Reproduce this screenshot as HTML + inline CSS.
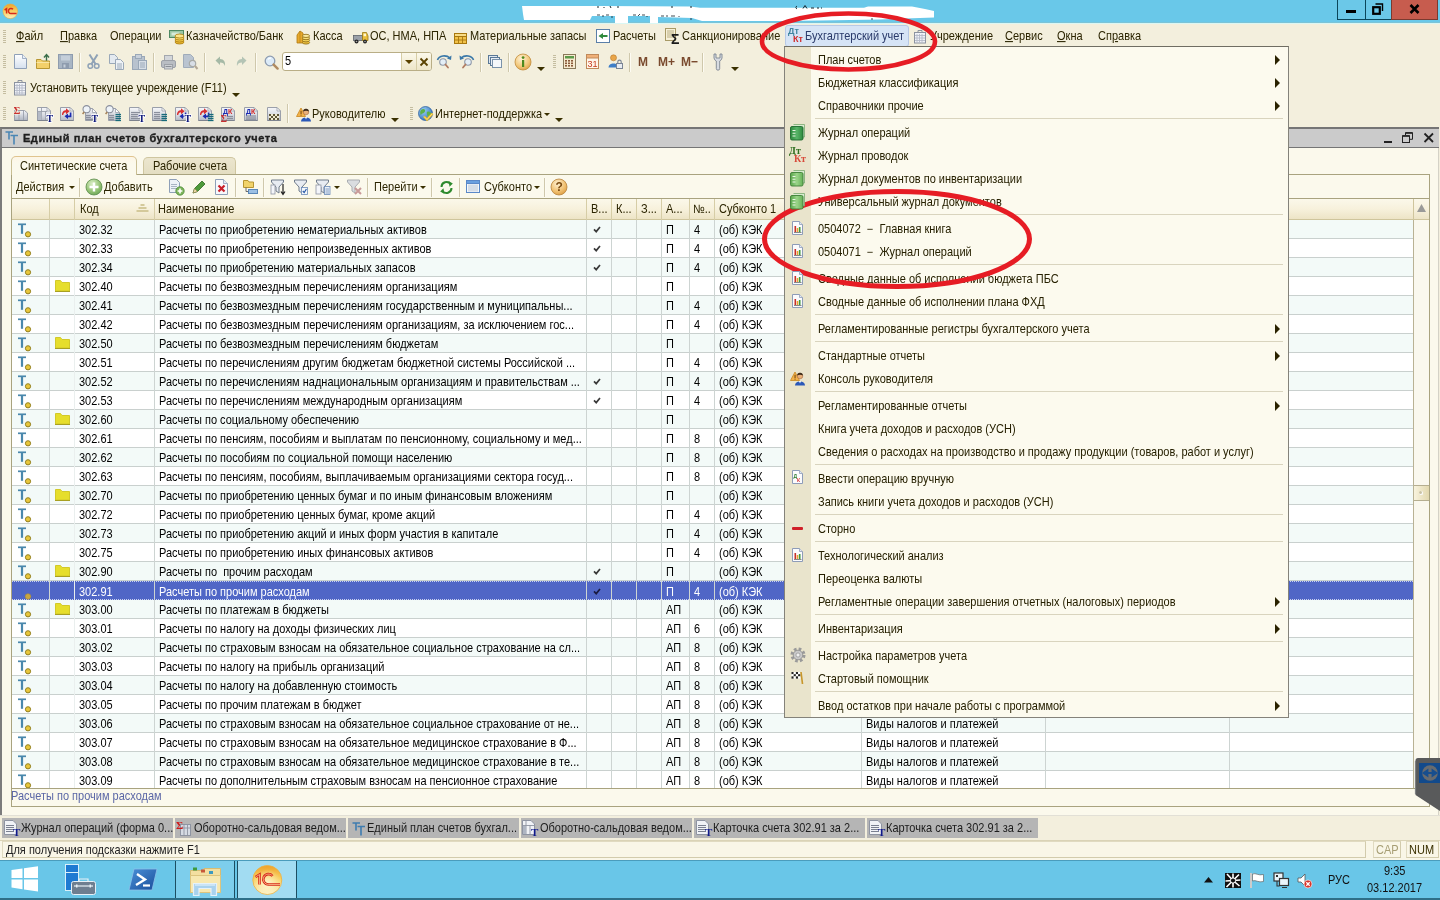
<!DOCTYPE html>
<html><head><meta charset="utf-8"><title>1C</title><style>
*{box-sizing:border-box;margin:0;padding:0}
html,body{width:1440px;height:900px;overflow:hidden}
body{position:relative;background:#F3EFDD;font-family:"Liberation Sans",sans-serif;font-size:11px;color:#2b2400;line-height:13px}
.a{position:absolute}
.t{position:absolute;white-space:nowrap;transform:scaleY(1.08);transform-origin:0 10.3px}
u{text-decoration:underline}
#wrap{position:absolute;left:0;top:0;width:1440px;height:900px;overflow:hidden;will-change:transform;-webkit-font-smoothing:antialiased}
#title{left:0;top:0;width:1440px;height:22px;background:#6BC8E8}
#title2{left:0;top:22px;width:1440px;height:1px;background:#D8F3F6}
.wb{position:absolute;top:0;height:20px;border:1px solid #0B465A;border-top:none}
#mdi{left:0;top:127px;width:1439px;height:689px;background:#FBF9EC;border-left:2px solid #7C7C7C;border-right:1px solid #9a9a9a}
#mdit{left:0;top:127px;width:1439px;height:21px;background:#CBCBCB;border-top:2px solid #777;border-bottom:1px solid #777;border-left:2px solid #7C7C7C}
.cell{position:absolute;top:1px;height:18px;line-height:18px;white-space:nowrap;overflow:hidden;color:#000;padding-left:4px;transform:scaleY(1.08);transform-origin:0 12.8px}
.row{position:absolute;left:12px;width:1401px;height:19px;border-bottom:1px solid #C9D0CE}
.r0{background:#F3FAF8}.r1{background:#FFFFFF}
.vs{position:absolute;top:220px;width:1px;height:568px;background:#CDD4D2}
.hs{position:absolute;top:199px;width:1px;height:21px;background:#D6CDA6}
.mi{position:absolute;left:818px;margin-top:0.5px;white-space:nowrap;color:#262000;transform:scaleY(1.08);transform-origin:0 10.3px}
.msep{position:absolute;left:815px;width:468px;height:1px;background:#D9D4BE}
.marr{position:absolute;left:1275px;margin-top:1px;width:0;height:0;border-left:5px solid #2a2200;border-top:5px solid transparent;border-bottom:5px solid transparent}
.wtab{position:absolute;top:818px;height:20px;background:#B5B5B5;line-height:20px;white-space:nowrap;overflow:hidden;color:#1c1c1c}
.wtab span{display:inline-block;transform:scaleY(1.08);transform-origin:0 13.8px}
.tsep{position:absolute;width:1px;background:#C9C2A5;border-right:1px solid #fff}
.grip{position:absolute;width:3px;background:repeating-linear-gradient(to bottom,#C4BDA0 0,#C4BDA0 1px,transparent 1px,transparent 2px)}
.dd{position:absolute;width:0;height:0;border-top:4px solid #3a3000;border-left:4px solid transparent;border-right:4px solid transparent}
.dds{position:absolute;width:0;height:0;border-top:3px solid #3a3000;border-left:3px solid transparent;border-right:3px solid transparent}
</style></head><body><div id="wrap">
<div class="a" style="left:0px;top:0px;width:1440px;height:23px;background:#69C8E9"></div>
<div class="a" style="left:0px;top:22px;width:1440px;height:1px;background:#7CC3D6"></div>
<div class="a" style="left:0px;top:23px;width:1440px;height:1px;background:#DAF7F4"></div>
<svg class="a" style="left:0;top:0" width="1440" height="24"><path d="M522 6 L600 6 L690 6.500 L700 7.700 L780 7.700 L864 7.700 L868 6.400 L912 6.400 L925 9 L934 11 L934 17.500 L905 18.500 L880 19.500 L820 20.500 L780 21 L702 21 L692 18 L658 17 L658 23 L650 23 L650 16 L628 16 L628 23 L615 23 L615 16 L592 16 L590 20 L524 20 L523 14 Z" fill="#fff"/><path d="M598 6 V8 M604 7 V8 M610 6 L611 8 M617 7 H619 M672 6 V8 M690 7 H692 M797 6 C795.500 7 795.500 8 797 9 M803 8.500 L805 5.500 L807 8.500 M811 8 H814 M817 8 H819 M821 8 H822" stroke="#15242c" stroke-width="1" fill="none"/><path d="M597 15 H600 M603 15 V17 M606 15 H609 M612 16 V18 M633 15 H636 M638 16 L640 14 M642 15 H645 M647 16 V17 M661 16 H664 M667 15 V17 M671 16 H675 M679 16 V17 M690 19 H692 M872 18 V20" stroke="#1c2c34" stroke-width="1" fill="none" opacity="0.85"/></svg>
<div class="a" style="left:1337px;top:0px;width:29px;height:20px;border:1px solid #0B465A;border-top:none;background:#6BC8E8"></div>
<div class="a" style="left:1365px;top:0px;width:27px;height:20px;border:1px solid #0B465A;border-top:none;background:#6BC8E8"></div>
<div class="a" style="left:1391px;top:0px;width:47px;height:20px;border:1px solid #7a3a30;border-top:none;background:#C75C4E"></div>
<div class="a" style="left:1346px;top:10px;width:10px;height:3px;background:#000"></div>
<svg class="a" style="left:1372px;top:3px" width="12" height="12"><path d="M3.5 1 H10.5 V8" fill="none" stroke="#000" stroke-width="1.4"/><rect x="1.2" y="4.2" width="6.6" height="6.6" fill="none" stroke="#000" stroke-width="2.2"/></svg>
<svg class="a" style="left:1409px;top:4px" width="12" height="10"><path d="M1.5 1 L9.5 9 M9.5 1 L1.5 9" stroke="#000" stroke-width="2.6"/></svg>
<div class="t" style="left:16px;top:30px;"><u>Ф</u>айл</div>
<div class="t" style="left:60px;top:30px;"><u>П</u>равка</div>
<div class="t" style="left:110px;top:30px;">Операции</div>
<div class="t" style="left:186px;top:30px;">Казначейство/Банк</div>
<div class="t" style="left:313px;top:30px;">Касса</div>
<div class="t" style="left:370px;top:30px;">ОС, НМА, НПА</div>
<div class="t" style="left:470px;top:30px;">Материальные запасы</div>
<div class="t" style="left:613px;top:30px;">Расчеты</div>
<div class="t" style="left:682px;top:30px;">Санкционирование</div>
<div class="t" style="left:930px;top:30px;">Учреждение</div>
<div class="t" style="left:1005px;top:30px;"><u>С</u>ервис</div>
<div class="t" style="left:1057px;top:30px;"><u>О</u>кна</div>
<div class="t" style="left:1098px;top:30px;">Сп<u>р</u>авка</div>
<div class="a" style="left:785px;top:25px;width:124px;height:22px;background:#D6E4F6;border:1px solid #B7C9E6;border-radius:3px"></div>
<div class="t" style="left:805px;top:30px;color:#2a3a6a">Бухгалтерский учет</div>
<div class="a" style="left:0px;top:127px;width:1439px;height:689px;background:#FBF9EC;border-left:2px solid #7C7C7C;border-right:1px solid #D4D2C6"></div>
<div class="a" style="left:0px;top:127px;width:1439px;height:21px;background:#CBCBCB;border-top:2px solid #757575;border-bottom:1px solid #757575;border-left:2px solid #7C7C7C"></div>
<div class="t" style="left:23px;top:132px;font-weight:bold;font-size:11px;letter-spacing:0.53px;color:#1e1e1e;transform:none;-webkit-text-stroke:0.35px #1e1e1e">Единый план счетов бухгалтерского учета</div>
<div class="a" style="left:11px;top:174px;width:1419px;height:633px;border:1px solid #A9A37F;background:#FBF9EC"></div>
<div class="a" style="left:11px;top:156px;width:126px;height:19px;border:1px solid #C9BE93;border-top:1px solid #E0C48E;border-bottom:none;border-radius:5px 5px 0 0;background:linear-gradient(#FDF6E6,#FBF9EC 40%)"></div>
<div class="a" style="left:143px;top:157px;width:93px;height:17px;border:1px solid #CFC6A0;border-bottom:none;border-radius:5px 5px 0 0;background:linear-gradient(#ECE6CE,#E4DEC2)"></div>
<div class="t" style="left:20px;top:160px;">Синтетические счета</div>
<div class="t" style="left:153px;top:160px;">Рабочие счета</div>
<div class="a" style="left:11px;top:198px;width:1419px;height:591px;border:1px solid #A9A37F;background:#fff"></div>
<div class="a" style="left:12px;top:199px;width:1401px;height:21px;background:linear-gradient(#FBF8EA 0%,#F7F1DC 50%,#EDE4C6 100%);border-bottom:1px solid #CFC59C"></div>
<div class="a" style="left:1413px;top:199px;width:16px;height:21px;background:linear-gradient(#FBF8EA 0%,#F7F1DC 50%,#EDE4C6 100%);border-bottom:1px solid #CFC59C;border-left:1px solid #CFC59C"></div>
<div class="a" style="left:1413px;top:220px;width:16px;height:568px;background:#FAF8EE;border-left:1px solid #B9B294"></div>
<div class="t" style="left:80px;top:203px;">Код</div>
<div class="t" style="left:158px;top:203px;">Наименование</div>
<div class="t" style="left:591px;top:203px;">В...</div>
<div class="t" style="left:616px;top:203px;">К...</div>
<div class="t" style="left:641px;top:203px;">З...</div>
<div class="t" style="left:666px;top:203px;">А...</div>
<div class="t" style="left:693px;top:203px;">№..</div>
<div class="t" style="left:719px;top:203px;">Субконто 1</div>
<div class="row r0" style="top:220px;"><svg class="a" style="left:5px;top:3px" width="16" height="16"><path d="M1 1.300 H9" stroke="#4A88AC" stroke-width="1.7" fill="none"/><path d="M5 1.300 V10.800" stroke="#4A88AC" stroke-width="2.2" fill="none"/><circle cx="11" cy="11.300" r="2.600" fill="#E8C63C" stroke="#93801F" stroke-width="1"/></svg><svg class="a" style="left:581px;top:6px" width="9" height="8"><path d="M1 3.300 L3.200 5.600 L7 1" stroke="#3a3a3a" stroke-width="1.7" fill="none"/></svg><div class="cell" style="left:63px;color:#000">302.32</div><div class="cell" style="left:143px;width:431px;color:#000">Расчеты по приобретению нематериальных активов</div><div class="cell" style="left:650px;color:#000">П</div><div class="cell" style="left:678px;color:#000">4</div><div class="cell" style="left:703px;color:#000">(об) КЭК</div></div>
<div class="row r1" style="top:239px;"><svg class="a" style="left:5px;top:3px" width="16" height="16"><path d="M1 1.300 H9" stroke="#4A88AC" stroke-width="1.7" fill="none"/><path d="M5 1.300 V10.800" stroke="#4A88AC" stroke-width="2.2" fill="none"/><circle cx="11" cy="11.300" r="2.600" fill="#E8C63C" stroke="#93801F" stroke-width="1"/></svg><svg class="a" style="left:581px;top:6px" width="9" height="8"><path d="M1 3.300 L3.200 5.600 L7 1" stroke="#3a3a3a" stroke-width="1.7" fill="none"/></svg><div class="cell" style="left:63px;color:#000">302.33</div><div class="cell" style="left:143px;width:431px;color:#000">Расчеты по приобретению непроизведенных активов</div><div class="cell" style="left:650px;color:#000">П</div><div class="cell" style="left:678px;color:#000">4</div><div class="cell" style="left:703px;color:#000">(об) КЭК</div></div>
<div class="row r0" style="top:258px;"><svg class="a" style="left:5px;top:3px" width="16" height="16"><path d="M1 1.300 H9" stroke="#4A88AC" stroke-width="1.7" fill="none"/><path d="M5 1.300 V10.800" stroke="#4A88AC" stroke-width="2.2" fill="none"/><circle cx="11" cy="11.300" r="2.600" fill="#E8C63C" stroke="#93801F" stroke-width="1"/></svg><svg class="a" style="left:581px;top:6px" width="9" height="8"><path d="M1 3.300 L3.200 5.600 L7 1" stroke="#3a3a3a" stroke-width="1.7" fill="none"/></svg><div class="cell" style="left:63px;color:#000">302.34</div><div class="cell" style="left:143px;width:431px;color:#000">Расчеты по приобретению материальных запасов</div><div class="cell" style="left:650px;color:#000">П</div><div class="cell" style="left:678px;color:#000">4</div><div class="cell" style="left:703px;color:#000">(об) КЭК</div></div>
<div class="row r1" style="top:277px;"><svg class="a" style="left:5px;top:3px" width="16" height="16"><path d="M1 1.300 H9" stroke="#4A88AC" stroke-width="1.7" fill="none"/><path d="M5 1.300 V10.800" stroke="#4A88AC" stroke-width="2.2" fill="none"/><circle cx="11" cy="11.300" r="2.600" fill="#E8C63C" stroke="#93801F" stroke-width="1"/></svg><svg class="a" style="left:43px;top:3px" width="16" height="13"><path d="M0.5 0.5 H5.5 L7 2.5 H14.5 V11 H0.5 Z" fill="#E6DE2C" stroke="#D2C92A" stroke-width="1"/><path d="M0 11.5 H15" stroke="#A8A022" stroke-width="1"/></svg><div class="cell" style="left:63px;color:#000">302.40</div><div class="cell" style="left:143px;width:431px;color:#000">Расчеты по безвозмездным перечислениям организациям</div><div class="cell" style="left:650px;color:#000">П</div><div class="cell" style="left:678px;color:#000"></div><div class="cell" style="left:703px;color:#000">(об) КЭК</div></div>
<div class="row r0" style="top:296px;"><svg class="a" style="left:5px;top:3px" width="16" height="16"><path d="M1 1.300 H9" stroke="#4A88AC" stroke-width="1.7" fill="none"/><path d="M5 1.300 V10.800" stroke="#4A88AC" stroke-width="2.2" fill="none"/><circle cx="11" cy="11.300" r="2.600" fill="#E8C63C" stroke="#93801F" stroke-width="1"/></svg><div class="cell" style="left:63px;color:#000">302.41</div><div class="cell" style="left:143px;width:431px;color:#000">Расчеты по безвозмездным перечислениям государственным и муниципальны...</div><div class="cell" style="left:650px;color:#000">П</div><div class="cell" style="left:678px;color:#000">4</div><div class="cell" style="left:703px;color:#000">(об) КЭК</div></div>
<div class="row r1" style="top:315px;"><svg class="a" style="left:5px;top:3px" width="16" height="16"><path d="M1 1.300 H9" stroke="#4A88AC" stroke-width="1.7" fill="none"/><path d="M5 1.300 V10.800" stroke="#4A88AC" stroke-width="2.2" fill="none"/><circle cx="11" cy="11.300" r="2.600" fill="#E8C63C" stroke="#93801F" stroke-width="1"/></svg><div class="cell" style="left:63px;color:#000">302.42</div><div class="cell" style="left:143px;width:431px;color:#000">Расчеты по безвозмездным перечислениям организациям, за исключением гос...</div><div class="cell" style="left:650px;color:#000">П</div><div class="cell" style="left:678px;color:#000">4</div><div class="cell" style="left:703px;color:#000">(об) КЭК</div></div>
<div class="row r0" style="top:334px;"><svg class="a" style="left:5px;top:3px" width="16" height="16"><path d="M1 1.300 H9" stroke="#4A88AC" stroke-width="1.7" fill="none"/><path d="M5 1.300 V10.800" stroke="#4A88AC" stroke-width="2.2" fill="none"/><circle cx="11" cy="11.300" r="2.600" fill="#E8C63C" stroke="#93801F" stroke-width="1"/></svg><svg class="a" style="left:43px;top:3px" width="16" height="13"><path d="M0.5 0.5 H5.5 L7 2.5 H14.5 V11 H0.5 Z" fill="#E6DE2C" stroke="#D2C92A" stroke-width="1"/><path d="M0 11.5 H15" stroke="#A8A022" stroke-width="1"/></svg><div class="cell" style="left:63px;color:#000">302.50</div><div class="cell" style="left:143px;width:431px;color:#000">Расчеты по безвозмездным перечислениям бюджетам</div><div class="cell" style="left:650px;color:#000">П</div><div class="cell" style="left:678px;color:#000"></div><div class="cell" style="left:703px;color:#000">(об) КЭК</div></div>
<div class="row r1" style="top:353px;"><svg class="a" style="left:5px;top:3px" width="16" height="16"><path d="M1 1.300 H9" stroke="#4A88AC" stroke-width="1.7" fill="none"/><path d="M5 1.300 V10.800" stroke="#4A88AC" stroke-width="2.2" fill="none"/><circle cx="11" cy="11.300" r="2.600" fill="#E8C63C" stroke="#93801F" stroke-width="1"/></svg><div class="cell" style="left:63px;color:#000">302.51</div><div class="cell" style="left:143px;width:431px;color:#000">Расчеты по перечислениям другим бюджетам бюджетной системы Российской ...</div><div class="cell" style="left:650px;color:#000">П</div><div class="cell" style="left:678px;color:#000">4</div><div class="cell" style="left:703px;color:#000">(об) КЭК</div></div>
<div class="row r0" style="top:372px;"><svg class="a" style="left:5px;top:3px" width="16" height="16"><path d="M1 1.300 H9" stroke="#4A88AC" stroke-width="1.7" fill="none"/><path d="M5 1.300 V10.800" stroke="#4A88AC" stroke-width="2.2" fill="none"/><circle cx="11" cy="11.300" r="2.600" fill="#E8C63C" stroke="#93801F" stroke-width="1"/></svg><svg class="a" style="left:581px;top:6px" width="9" height="8"><path d="M1 3.300 L3.200 5.600 L7 1" stroke="#3a3a3a" stroke-width="1.7" fill="none"/></svg><div class="cell" style="left:63px;color:#000">302.52</div><div class="cell" style="left:143px;width:431px;color:#000">Расчеты по перечислениям наднациональным организациям и правительствам ...</div><div class="cell" style="left:650px;color:#000">П</div><div class="cell" style="left:678px;color:#000">4</div><div class="cell" style="left:703px;color:#000">(об) КЭК</div></div>
<div class="row r1" style="top:391px;"><svg class="a" style="left:5px;top:3px" width="16" height="16"><path d="M1 1.300 H9" stroke="#4A88AC" stroke-width="1.7" fill="none"/><path d="M5 1.300 V10.800" stroke="#4A88AC" stroke-width="2.2" fill="none"/><circle cx="11" cy="11.300" r="2.600" fill="#E8C63C" stroke="#93801F" stroke-width="1"/></svg><svg class="a" style="left:581px;top:6px" width="9" height="8"><path d="M1 3.300 L3.200 5.600 L7 1" stroke="#3a3a3a" stroke-width="1.7" fill="none"/></svg><div class="cell" style="left:63px;color:#000">302.53</div><div class="cell" style="left:143px;width:431px;color:#000">Расчеты по перечислениям международным организациям</div><div class="cell" style="left:650px;color:#000">П</div><div class="cell" style="left:678px;color:#000">4</div><div class="cell" style="left:703px;color:#000">(об) КЭК</div></div>
<div class="row r0" style="top:410px;"><svg class="a" style="left:5px;top:3px" width="16" height="16"><path d="M1 1.300 H9" stroke="#4A88AC" stroke-width="1.7" fill="none"/><path d="M5 1.300 V10.800" stroke="#4A88AC" stroke-width="2.2" fill="none"/><circle cx="11" cy="11.300" r="2.600" fill="#E8C63C" stroke="#93801F" stroke-width="1"/></svg><svg class="a" style="left:43px;top:3px" width="16" height="13"><path d="M0.5 0.5 H5.5 L7 2.5 H14.5 V11 H0.5 Z" fill="#E6DE2C" stroke="#D2C92A" stroke-width="1"/><path d="M0 11.5 H15" stroke="#A8A022" stroke-width="1"/></svg><div class="cell" style="left:63px;color:#000">302.60</div><div class="cell" style="left:143px;width:431px;color:#000">Расчеты по социальному обеспечению</div><div class="cell" style="left:650px;color:#000">П</div><div class="cell" style="left:678px;color:#000"></div><div class="cell" style="left:703px;color:#000">(об) КЭК</div></div>
<div class="row r1" style="top:429px;"><svg class="a" style="left:5px;top:3px" width="16" height="16"><path d="M1 1.300 H9" stroke="#4A88AC" stroke-width="1.7" fill="none"/><path d="M5 1.300 V10.800" stroke="#4A88AC" stroke-width="2.2" fill="none"/><circle cx="11" cy="11.300" r="2.600" fill="#E8C63C" stroke="#93801F" stroke-width="1"/></svg><div class="cell" style="left:63px;color:#000">302.61</div><div class="cell" style="left:143px;width:431px;color:#000">Расчеты по пенсиям, пособиям и выплатам по пенсионному, социальному и мед...</div><div class="cell" style="left:650px;color:#000">П</div><div class="cell" style="left:678px;color:#000">8</div><div class="cell" style="left:703px;color:#000">(об) КЭК</div></div>
<div class="row r0" style="top:448px;"><svg class="a" style="left:5px;top:3px" width="16" height="16"><path d="M1 1.300 H9" stroke="#4A88AC" stroke-width="1.7" fill="none"/><path d="M5 1.300 V10.800" stroke="#4A88AC" stroke-width="2.2" fill="none"/><circle cx="11" cy="11.300" r="2.600" fill="#E8C63C" stroke="#93801F" stroke-width="1"/></svg><div class="cell" style="left:63px;color:#000">302.62</div><div class="cell" style="left:143px;width:431px;color:#000">Расчеты по пособиям по социальной помощи населению</div><div class="cell" style="left:650px;color:#000">П</div><div class="cell" style="left:678px;color:#000">8</div><div class="cell" style="left:703px;color:#000">(об) КЭК</div></div>
<div class="row r1" style="top:467px;"><svg class="a" style="left:5px;top:3px" width="16" height="16"><path d="M1 1.300 H9" stroke="#4A88AC" stroke-width="1.7" fill="none"/><path d="M5 1.300 V10.800" stroke="#4A88AC" stroke-width="2.2" fill="none"/><circle cx="11" cy="11.300" r="2.600" fill="#E8C63C" stroke="#93801F" stroke-width="1"/></svg><div class="cell" style="left:63px;color:#000">302.63</div><div class="cell" style="left:143px;width:431px;color:#000">Расчеты по пенсиям, пособиям, выплачиваемым организациями сектора госуд...</div><div class="cell" style="left:650px;color:#000">П</div><div class="cell" style="left:678px;color:#000">8</div><div class="cell" style="left:703px;color:#000">(об) КЭК</div></div>
<div class="row r0" style="top:486px;"><svg class="a" style="left:5px;top:3px" width="16" height="16"><path d="M1 1.300 H9" stroke="#4A88AC" stroke-width="1.7" fill="none"/><path d="M5 1.300 V10.800" stroke="#4A88AC" stroke-width="2.2" fill="none"/><circle cx="11" cy="11.300" r="2.600" fill="#E8C63C" stroke="#93801F" stroke-width="1"/></svg><svg class="a" style="left:43px;top:3px" width="16" height="13"><path d="M0.5 0.5 H5.5 L7 2.5 H14.5 V11 H0.5 Z" fill="#E6DE2C" stroke="#D2C92A" stroke-width="1"/><path d="M0 11.5 H15" stroke="#A8A022" stroke-width="1"/></svg><div class="cell" style="left:63px;color:#000">302.70</div><div class="cell" style="left:143px;width:431px;color:#000">Расчеты по приобретению ценных бумаг и по иным финансовым вложениям</div><div class="cell" style="left:650px;color:#000">П</div><div class="cell" style="left:678px;color:#000"></div><div class="cell" style="left:703px;color:#000">(об) КЭК</div></div>
<div class="row r1" style="top:505px;"><svg class="a" style="left:5px;top:3px" width="16" height="16"><path d="M1 1.300 H9" stroke="#4A88AC" stroke-width="1.7" fill="none"/><path d="M5 1.300 V10.800" stroke="#4A88AC" stroke-width="2.2" fill="none"/><circle cx="11" cy="11.300" r="2.600" fill="#E8C63C" stroke="#93801F" stroke-width="1"/></svg><div class="cell" style="left:63px;color:#000">302.72</div><div class="cell" style="left:143px;width:431px;color:#000">Расчеты по приобретению ценных бумаг, кроме акций</div><div class="cell" style="left:650px;color:#000">П</div><div class="cell" style="left:678px;color:#000">4</div><div class="cell" style="left:703px;color:#000">(об) КЭК</div></div>
<div class="row r0" style="top:524px;"><svg class="a" style="left:5px;top:3px" width="16" height="16"><path d="M1 1.300 H9" stroke="#4A88AC" stroke-width="1.7" fill="none"/><path d="M5 1.300 V10.800" stroke="#4A88AC" stroke-width="2.2" fill="none"/><circle cx="11" cy="11.300" r="2.600" fill="#E8C63C" stroke="#93801F" stroke-width="1"/></svg><div class="cell" style="left:63px;color:#000">302.73</div><div class="cell" style="left:143px;width:431px;color:#000">Расчеты по приобретению акций и иных форм участия в капитале</div><div class="cell" style="left:650px;color:#000">П</div><div class="cell" style="left:678px;color:#000">4</div><div class="cell" style="left:703px;color:#000">(об) КЭК</div></div>
<div class="row r1" style="top:543px;"><svg class="a" style="left:5px;top:3px" width="16" height="16"><path d="M1 1.300 H9" stroke="#4A88AC" stroke-width="1.7" fill="none"/><path d="M5 1.300 V10.800" stroke="#4A88AC" stroke-width="2.2" fill="none"/><circle cx="11" cy="11.300" r="2.600" fill="#E8C63C" stroke="#93801F" stroke-width="1"/></svg><div class="cell" style="left:63px;color:#000">302.75</div><div class="cell" style="left:143px;width:431px;color:#000">Расчеты по приобретению иных финансовых активов</div><div class="cell" style="left:650px;color:#000">П</div><div class="cell" style="left:678px;color:#000">4</div><div class="cell" style="left:703px;color:#000">(об) КЭК</div></div>
<div class="row r0" style="top:562px;"><svg class="a" style="left:5px;top:3px" width="16" height="16"><path d="M1 1.300 H9" stroke="#4A88AC" stroke-width="1.7" fill="none"/><path d="M5 1.300 V10.800" stroke="#4A88AC" stroke-width="2.2" fill="none"/><circle cx="11" cy="11.300" r="2.600" fill="#E8C63C" stroke="#93801F" stroke-width="1"/></svg><svg class="a" style="left:43px;top:3px" width="16" height="13"><path d="M0.5 0.5 H5.5 L7 2.5 H14.5 V11 H0.5 Z" fill="#E6DE2C" stroke="#D2C92A" stroke-width="1"/><path d="M0 11.5 H15" stroke="#A8A022" stroke-width="1"/></svg><svg class="a" style="left:581px;top:6px" width="9" height="8"><path d="M1 3.300 L3.200 5.600 L7 1" stroke="#3a3a3a" stroke-width="1.7" fill="none"/></svg><div class="cell" style="left:63px;color:#000">302.90</div><div class="cell" style="left:143px;width:431px;color:#000">Расчеты по&nbsp; прочим расходам</div><div class="cell" style="left:650px;color:#000">П</div><div class="cell" style="left:678px;color:#000"></div><div class="cell" style="left:703px;color:#000">(об) КЭК</div></div>
<div class="row r1" style="top:581px;background:#5066C6;border-bottom:1px dotted #C8D0F0;border-top:1px dotted #C8D0F0;"><svg class="a" style="left:5px;top:3px" width="16" height="16"><path d="M1 1.5 H10 M5.5 1.5 V11" stroke="#4A68C8" stroke-width="2.2" fill="none"/><circle cx="11" cy="11.5" r="2.8" fill="#C9A640" stroke="#A88A38" stroke-width="0.6"/></svg><svg class="a" style="left:581px;top:6px" width="9" height="8"><path d="M1 3.300 L3.200 5.600 L7 1" stroke="#1a1a40" stroke-width="1.7" fill="none"/></svg><div class="cell" style="left:63px;color:#fff">302.91</div><div class="cell" style="left:143px;width:431px;color:#fff">Расчеты по прочим расходам</div><div class="cell" style="left:650px;color:#fff">П</div><div class="cell" style="left:678px;color:#fff">4</div><div class="cell" style="left:703px;color:#fff">(об) КЭК</div></div>
<div class="row r0" style="top:600px;"><svg class="a" style="left:5px;top:3px" width="16" height="16"><path d="M1 1.300 H9" stroke="#4A88AC" stroke-width="1.7" fill="none"/><path d="M5 1.300 V10.800" stroke="#4A88AC" stroke-width="2.2" fill="none"/><circle cx="11" cy="11.300" r="2.600" fill="#E8C63C" stroke="#93801F" stroke-width="1"/></svg><svg class="a" style="left:43px;top:3px" width="16" height="13"><path d="M0.5 0.5 H5.5 L7 2.5 H14.5 V11 H0.5 Z" fill="#E6DE2C" stroke="#D2C92A" stroke-width="1"/><path d="M0 11.5 H15" stroke="#A8A022" stroke-width="1"/></svg><div class="cell" style="left:63px;color:#000">303.00</div><div class="cell" style="left:143px;width:431px;color:#000">Расчеты по платежам в бюджеты</div><div class="cell" style="left:650px;color:#000">АП</div><div class="cell" style="left:678px;color:#000"></div><div class="cell" style="left:703px;color:#000">(об) КЭК</div></div>
<div class="row r1" style="top:619px;"><svg class="a" style="left:5px;top:3px" width="16" height="16"><path d="M1 1.300 H9" stroke="#4A88AC" stroke-width="1.7" fill="none"/><path d="M5 1.300 V10.800" stroke="#4A88AC" stroke-width="2.2" fill="none"/><circle cx="11" cy="11.300" r="2.600" fill="#E8C63C" stroke="#93801F" stroke-width="1"/></svg><div class="cell" style="left:63px;color:#000">303.01</div><div class="cell" style="left:143px;width:431px;color:#000">Расчеты по налогу на доходы физических лиц</div><div class="cell" style="left:650px;color:#000">АП</div><div class="cell" style="left:678px;color:#000">6</div><div class="cell" style="left:703px;color:#000">(об) КЭК</div></div>
<div class="row r0" style="top:638px;"><svg class="a" style="left:5px;top:3px" width="16" height="16"><path d="M1 1.300 H9" stroke="#4A88AC" stroke-width="1.7" fill="none"/><path d="M5 1.300 V10.800" stroke="#4A88AC" stroke-width="2.2" fill="none"/><circle cx="11" cy="11.300" r="2.600" fill="#E8C63C" stroke="#93801F" stroke-width="1"/></svg><div class="cell" style="left:63px;color:#000">303.02</div><div class="cell" style="left:143px;width:431px;color:#000">Расчеты по страховым взносам на обязательное социальное страхование на сл...</div><div class="cell" style="left:650px;color:#000">АП</div><div class="cell" style="left:678px;color:#000">8</div><div class="cell" style="left:703px;color:#000">(об) КЭК</div></div>
<div class="row r1" style="top:657px;"><svg class="a" style="left:5px;top:3px" width="16" height="16"><path d="M1 1.300 H9" stroke="#4A88AC" stroke-width="1.7" fill="none"/><path d="M5 1.300 V10.800" stroke="#4A88AC" stroke-width="2.2" fill="none"/><circle cx="11" cy="11.300" r="2.600" fill="#E8C63C" stroke="#93801F" stroke-width="1"/></svg><div class="cell" style="left:63px;color:#000">303.03</div><div class="cell" style="left:143px;width:431px;color:#000">Расчеты по налогу на прибыль организаций</div><div class="cell" style="left:650px;color:#000">АП</div><div class="cell" style="left:678px;color:#000">8</div><div class="cell" style="left:703px;color:#000">(об) КЭК</div></div>
<div class="row r0" style="top:676px;"><svg class="a" style="left:5px;top:3px" width="16" height="16"><path d="M1 1.300 H9" stroke="#4A88AC" stroke-width="1.7" fill="none"/><path d="M5 1.300 V10.800" stroke="#4A88AC" stroke-width="2.2" fill="none"/><circle cx="11" cy="11.300" r="2.600" fill="#E8C63C" stroke="#93801F" stroke-width="1"/></svg><div class="cell" style="left:63px;color:#000">303.04</div><div class="cell" style="left:143px;width:431px;color:#000">Расчеты по налогу на добавленную стоимость</div><div class="cell" style="left:650px;color:#000">АП</div><div class="cell" style="left:678px;color:#000">8</div><div class="cell" style="left:703px;color:#000">(об) КЭК</div></div>
<div class="row r1" style="top:695px;"><svg class="a" style="left:5px;top:3px" width="16" height="16"><path d="M1 1.300 H9" stroke="#4A88AC" stroke-width="1.7" fill="none"/><path d="M5 1.300 V10.800" stroke="#4A88AC" stroke-width="2.2" fill="none"/><circle cx="11" cy="11.300" r="2.600" fill="#E8C63C" stroke="#93801F" stroke-width="1"/></svg><div class="cell" style="left:63px;color:#000">303.05</div><div class="cell" style="left:143px;width:431px;color:#000">Расчеты по прочим платежам в бюджет</div><div class="cell" style="left:650px;color:#000">АП</div><div class="cell" style="left:678px;color:#000">8</div><div class="cell" style="left:703px;color:#000">(об) КЭК</div></div>
<div class="row r0" style="top:714px;"><svg class="a" style="left:5px;top:3px" width="16" height="16"><path d="M1 1.300 H9" stroke="#4A88AC" stroke-width="1.7" fill="none"/><path d="M5 1.300 V10.800" stroke="#4A88AC" stroke-width="2.2" fill="none"/><circle cx="11" cy="11.300" r="2.600" fill="#E8C63C" stroke="#93801F" stroke-width="1"/></svg><div class="cell" style="left:63px;color:#000">303.06</div><div class="cell" style="left:143px;width:431px;color:#000">Расчеты по страховым взносам на обязательное социальное страхование от не...</div><div class="cell" style="left:650px;color:#000">АП</div><div class="cell" style="left:678px;color:#000">8</div><div class="cell" style="left:703px;color:#000">(об) КЭК</div><div class="cell" style="left:850px;color:#000">Виды налогов и платежей</div></div>
<div class="row r1" style="top:733px;"><svg class="a" style="left:5px;top:3px" width="16" height="16"><path d="M1 1.300 H9" stroke="#4A88AC" stroke-width="1.7" fill="none"/><path d="M5 1.300 V10.800" stroke="#4A88AC" stroke-width="2.2" fill="none"/><circle cx="11" cy="11.300" r="2.600" fill="#E8C63C" stroke="#93801F" stroke-width="1"/></svg><div class="cell" style="left:63px;color:#000">303.07</div><div class="cell" style="left:143px;width:431px;color:#000">Расчеты по страховым взносам на обязательное медицинское страхование в Ф...</div><div class="cell" style="left:650px;color:#000">АП</div><div class="cell" style="left:678px;color:#000">8</div><div class="cell" style="left:703px;color:#000">(об) КЭК</div><div class="cell" style="left:850px;color:#000">Виды налогов и платежей</div></div>
<div class="row r0" style="top:752px;"><svg class="a" style="left:5px;top:3px" width="16" height="16"><path d="M1 1.300 H9" stroke="#4A88AC" stroke-width="1.7" fill="none"/><path d="M5 1.300 V10.800" stroke="#4A88AC" stroke-width="2.2" fill="none"/><circle cx="11" cy="11.300" r="2.600" fill="#E8C63C" stroke="#93801F" stroke-width="1"/></svg><div class="cell" style="left:63px;color:#000">303.08</div><div class="cell" style="left:143px;width:431px;color:#000">Расчеты по страховым взносам на обязательное медицинское страхование в те...</div><div class="cell" style="left:650px;color:#000">АП</div><div class="cell" style="left:678px;color:#000">8</div><div class="cell" style="left:703px;color:#000">(об) КЭК</div><div class="cell" style="left:850px;color:#000">Виды налогов и платежей</div></div>
<div class="row r1" style="top:771px;height:17px;border-bottom:none;overflow:hidden;"><svg class="a" style="left:5px;top:3px" width="16" height="16"><path d="M1 1.300 H9" stroke="#4A88AC" stroke-width="1.7" fill="none"/><path d="M5 1.300 V10.800" stroke="#4A88AC" stroke-width="2.2" fill="none"/><circle cx="11" cy="11.300" r="2.600" fill="#E8C63C" stroke="#93801F" stroke-width="1"/></svg><div class="cell" style="left:63px;color:#000">303.09</div><div class="cell" style="left:143px;width:431px;color:#000">Расчеты по дополнительным страховым взносам на пенсионное страхование</div><div class="cell" style="left:650px;color:#000">АП</div><div class="cell" style="left:678px;color:#000">8</div><div class="cell" style="left:703px;color:#000">(об) КЭК</div><div class="cell" style="left:850px;color:#000">Виды налогов и платежей</div></div>
<div class="vs" style="left:49px;"></div>
<div class="hs" style="left:49px"></div>
<div class="vs" style="left:74px;background:#EAEFEE;"></div>
<div class="hs" style="left:74px"></div>
<div class="vs" style="left:154px;"></div>
<div class="hs" style="left:154px"></div>
<div class="vs" style="left:586px;"></div>
<div class="hs" style="left:586px"></div>
<div class="vs" style="left:611px;"></div>
<div class="hs" style="left:611px"></div>
<div class="vs" style="left:636px;"></div>
<div class="hs" style="left:636px"></div>
<div class="vs" style="left:661px;"></div>
<div class="hs" style="left:661px"></div>
<div class="vs" style="left:689px;"></div>
<div class="hs" style="left:689px"></div>
<div class="vs" style="left:714px;"></div>
<div class="hs" style="left:714px"></div>
<div class="vs" style="left:861px;"></div>
<div class="hs" style="left:861px"></div>
<div class="vs" style="left:1045px;"></div>
<div class="hs" style="left:1045px"></div>
<div class="vs" style="left:1229px;"></div>
<div class="hs" style="left:1229px"></div>
<div class="t" style="left:11px;top:790px;color:#5B67A6">Расчеты по прочим расходам</div>
<div class="a" style="left:784px;top:46px;width:505px;height:672px;background:#FCFAEE;border:1px solid #84827A;border-top:1px solid #6F6D62"></div>
<div class="a" style="left:785px;top:47px;width:26px;height:670px;background:#E9E4CC"></div>
<div class="mi" style="top:53px">План счетов</div>
<div class="marr" style="top:54px"></div>
<div class="mi" style="top:76px">Бюджетная классификация</div>
<div class="marr" style="top:77px"></div>
<div class="mi" style="top:99px">Справочники прочие</div>
<div class="marr" style="top:100px"></div>
<div class="msep" style="top:118px"></div>
<div class="mi" style="top:126px">Журнал операций</div>
<div class="mi" style="top:149px">Журнал проводок</div>
<div class="mi" style="top:172px">Журнал документов по инвентаризации</div>
<div class="mi" style="top:195px">Универсальный журнал документов</div>
<div class="msep" style="top:214px"></div>
<div class="mi" style="top:222px">0504072 &nbsp;−&nbsp; Главная книга</div>
<div class="mi" style="top:245px">0504071 &nbsp;−&nbsp; Журнал операций</div>
<div class="msep" style="top:264px"></div>
<div class="mi" style="top:272px">Сводные данные об исполнении бюджета ПБС</div>
<div class="mi" style="top:295px">Сводные данные об исполнении плана ФХД</div>
<div class="msep" style="top:314px"></div>
<div class="mi" style="top:322px">Регламентированные регистры бухгалтерского учета</div>
<div class="marr" style="top:323px"></div>
<div class="msep" style="top:341px"></div>
<div class="mi" style="top:349px">Стандартные отчеты</div>
<div class="marr" style="top:350px"></div>
<div class="mi" style="top:372px">Консоль руководителя</div>
<div class="msep" style="top:391px"></div>
<div class="mi" style="top:399px">Регламентированные отчеты</div>
<div class="marr" style="top:400px"></div>
<div class="mi" style="top:422px">Книга учета доходов и расходов (УСН)</div>
<div class="mi" style="top:445px">Сведения о расходах на производство и продажу продукции (товаров, работ и услуг)</div>
<div class="msep" style="top:464px"></div>
<div class="mi" style="top:472px">Ввести операцию вручную</div>
<div class="mi" style="top:495px">Запись книги учета доходов и расходов (УСН)</div>
<div class="msep" style="top:514px"></div>
<div class="mi" style="top:522px">Сторно</div>
<div class="msep" style="top:541px"></div>
<div class="mi" style="top:549px">Технологический анализ</div>
<div class="mi" style="top:572px">Переоценка валюты</div>
<div class="mi" style="top:595px">Регламентные операции завершения отчетных (налоговых) периодов</div>
<div class="marr" style="top:596px"></div>
<div class="msep" style="top:614px"></div>
<div class="mi" style="top:622px">Инвентаризация</div>
<div class="marr" style="top:623px"></div>
<div class="msep" style="top:641px"></div>
<div class="mi" style="top:649px">Настройка параметров учета</div>
<div class="mi" style="top:672px">Стартовый помощник</div>
<div class="msep" style="top:691px"></div>
<div class="mi" style="top:699px">Ввод остатков при начале работы с программой</div>
<div class="marr" style="top:700px"></div>
<svg class="a" style="left:0;top:0" width="1440" height="900"><ellipse cx="848.5" cy="41.5" rx="86.5" ry="28" fill="none" stroke="#E61C24" stroke-width="4.6"/><ellipse cx="897" cy="239" rx="132.5" ry="47.5" fill="none" stroke="#E61C24" stroke-width="5"/></svg>
<div class="a" style="left:0px;top:815px;width:1440px;height:1px;background:#E2E0D6"></div>
<div class="wtab" style="left:2px;width:171px;padding-left:19px"><span>Журнал операций (форма 0...</span></div>
<div class="wtab" style="left:175px;width:171px;padding-left:19px"><span>Оборотно-сальдовая ведом...</span></div>
<div class="wtab" style="left:348px;width:171px;padding-left:19px"><span>Единый план счетов бухгал...</span></div>
<div class="wtab" style="left:521px;width:171px;padding-left:19px"><span>Оборотно-сальдовая ведом...</span></div>
<div class="wtab" style="left:694px;width:171px;padding-left:19px"><span>Карточка счета 302.91 за 2...</span></div>
<div class="wtab" style="left:867px;width:171px;padding-left:19px"><span>Карточка счета 302.91 за 2...</span></div>
<div class="a" style="left:0px;top:840px;width:1440px;height:20px;background:#F9F6E7;border-top:1px solid #DAD3B6"></div>
<div class="a" style="left:2px;top:841px;width:1364px;height:17px;border:1px solid #E0DAC0;border-right:1px solid #D2CBAC;border-bottom:1px solid #D2CBAC"></div>
<div class="t" style="left:6px;top:844px;color:#222">Для получения подсказки нажмите F1</div>
<div class="a" style="left:1373px;top:841px;width:28px;height:17px;border:1px solid #E0DAC0;border-right:1px solid #D2CBAC;border-bottom:1px solid #D2CBAC"></div>
<div class="a" style="left:1406px;top:841px;width:33px;height:17px;border:1px solid #E0DAC0;border-right:1px solid #D2CBAC;border-bottom:1px solid #D2CBAC"></div>
<div class="t" style="left:1376px;top:844px;color:#A79E74">CAP</div>
<div class="t" style="left:1409px;top:844px;color:#3a3000">NUM</div>
<div class="a" style="left:0px;top:860px;width:1440px;height:40px;background:#69C6E8;border-top:1px solid #4A9CBC;border-bottom:2px solid #2E6F88"></div>
<div class="a" style="left:175px;top:861px;width:60px;height:37px;background:#7DCEEC;border-left:1px solid #1C4E62;border-right:1px solid #1C4E62"></div>
<div class="a" style="left:237px;top:861px;width:60px;height:37px;background:#A2DCF2;border-left:1px solid #1C4E62;border-right:1px solid #1C4E62"></div>
<div class="t" style="left:1328px;top:874px;font-size:11px;color:#111">РУС</div>
<div class="t" style="left:1384px;top:865px;font-size:11px;color:#111">9:35</div>
<div class="t" style="left:1367px;top:882px;font-size:11px;color:#111">03.12.2017</div>
<div class="grip" style="left:3px;top:30px;height:13px"></div>
<svg class="a" style="left:169px;top:29px;" width="16" height="16" viewBox="0 0 16 16"><rect x="0.5" y="1.5" width="14" height="7" fill="#9CC7A6" stroke="#4F8A63"/><rect x="2.5" y="3.5" width="8" height="3" fill="#D7EBDA"/><ellipse cx="10.5" cy="13" rx="4.5" ry="2" fill="#E8B832" stroke="#A8780E" stroke-width="0.8"/><ellipse cx="10.5" cy="11" rx="4.5" ry="2" fill="#F2CB4A" stroke="#A8780E" stroke-width="0.8"/><ellipse cx="10.5" cy="9" rx="4.5" ry="2" fill="#F7D866" stroke="#A8780E" stroke-width="0.8"/><ellipse cx="10.5" cy="7" rx="4.5" ry="2" fill="#FBE58A" stroke="#A8780E" stroke-width="0.8"/></svg>
<svg class="a" style="left:296px;top:29px;" width="15" height="16" viewBox="0 0 15 16"><path d="M1 6 L4 2 L7 4 V14 H1 Z" fill="#E7A92C" stroke="#B07A12" stroke-width="0.8"/><path d="M4 2 V14" stroke="#B07A12" stroke-width="0.6"/><ellipse cx="10" cy="13.5" rx="3.6" ry="1.6" fill="#EDC040" stroke="#8C6A10" stroke-width="0.8"/><ellipse cx="10" cy="11.3" rx="3.6" ry="1.6" fill="#F4D35A" stroke="#8C6A10" stroke-width="0.8"/><ellipse cx="10" cy="9.1" rx="3.6" ry="1.6" fill="#F8E07A" stroke="#8C6A10" stroke-width="0.8"/><ellipse cx="10" cy="6.9" rx="3.6" ry="1.6" fill="#FBE89A" stroke="#8C6A10" stroke-width="0.8"/></svg>
<svg class="a" style="left:353px;top:30px;" width="16" height="14" viewBox="0 0 16 14"><rect x="0.5" y="5.5" width="9" height="5" fill="#9AA0A8" stroke="#5E646C" stroke-width="0.8"/><path d="M9.5 10.5 V2.5 H13.5 L15 6 V10.5 Z" fill="#E9BE3C" stroke="#9A7A12" stroke-width="0.8"/><rect x="10.6" y="3.6" width="2.4" height="2.6" fill="#FDF6D0"/><circle cx="3.5" cy="11.5" r="2" fill="#222"/><circle cx="12" cy="11.5" r="2" fill="#222"/><circle cx="3.5" cy="11.5" r="0.8" fill="#aaa"/><circle cx="12" cy="11.5" r="0.8" fill="#aaa"/></svg>
<svg class="a" style="left:454px;top:31px;" width="14" height="14" viewBox="0 0 14 14"><rect x="0.5" y="2.5" width="12" height="10" fill="#F1C24A" stroke="#A8780E"/><path d="M0.5 5.5 H12.5 M0.5 9 H12.5 M4.5 2.5 V12.5 M8.5 2.5 V12.5" stroke="#A8780E" stroke-width="0.9"/><rect x="0.5" y="2.5" width="12" height="3" fill="#F8DC86" stroke="#A8780E"/></svg>
<svg class="a" style="left:596px;top:29px;" width="14" height="14" viewBox="0 0 14 14"><rect x="0.5" y="0.5" width="13" height="13" fill="#fff" stroke="#5A7FA8"/><path d="M2.5 7 L7 4 V6 H11.5 V8 H7 V10 Z" fill="#2F8A3C"/></svg>
<svg class="a" style="left:665px;top:28px;" width="17" height="17" viewBox="0 0 17 17"><rect x="0.5" y="0.5" width="10" height="12" fill="#F7F1D8" stroke="#A89A66"/><path d="M2 3 H9" stroke="#B9AE84" stroke-width="1"/><path d="M2 5 H9" stroke="#B9AE84" stroke-width="1"/><path d="M2 7 H9" stroke="#B9AE84" stroke-width="1"/><path d="M2 9 H9" stroke="#B9AE84" stroke-width="1"/><text x="6" y="16" font-family="Liberation Sans" font-weight="bold" font-size="14" fill="#1A1A1A">Σ</text></svg>
<div class="t" style="left:788px;top:27px;font-size:9px;font-weight:bold;color:#3F86A0;line-height:8px;transform:none">Дт</div>
<div class="t" style="left:793px;top:35px;font-size:9px;font-weight:bold;color:#D02A2A;line-height:8px;transform:none">Кт</div>
<svg class="a" style="left:914px;top:30px;" width="13" height="14" viewBox="0 0 13 14"><path d="M4 2.5 V0.5 H8 V2.5" fill="none" stroke="#8C93A0"/><rect x="0.5" y="2.5" width="11" height="10.5" fill="#F0F2F7" stroke="#8C93A0"/><path d="M3 4 V12.5 M5.500 4 V12.5 M8 4 V12.5 M1 5.5 H11 M1 8.0 H11 M1 10.5 H11 " stroke="#B4BAC8" stroke-width="0.9"/></svg>
<div class="grip" style="left:3px;top:55px;height:13px"></div>
<svg class="a" style="left:14px;top:54px;" width="13" height="16" viewBox="0 0 13 16"><defs><linearGradient id="nd" x1="0" y1="0" x2="0" y2="1"><stop offset="0" stop-color="#fff"/><stop offset="1" stop-color="#D5E0EE"/></linearGradient></defs><path d="M0.5 0.5 H8.5 L12.5 4.5 V14.5 H0.5 Z" fill="url(#nd)" stroke="#8FA0B8"/><path d="M8.5 0.5 V4.5 H12.5" fill="#EAF0F8" stroke="#8FA0B8" stroke-width="0.8"/></svg>
<svg class="a" style="left:36px;top:53px;" width="15" height="17" viewBox="0 0 15 17"><path d="M10.5 8 V2.5 M8 4.5 L10.5 1.5 L13 4.5" fill="none" stroke="#3A6E4A" stroke-width="1.4"/><path d="M0.5 6.5 H5 L6.5 8 H13.5 V15.5 H0.5 Z" fill="#F3D06A" stroke="#B89632"/><path d="M0.5 9.5 H13.5" stroke="#F9E6A4" stroke-width="1"/></svg>
<svg class="a" style="left:58px;top:54px;" width="16" height="16" viewBox="0 0 16 16"><rect x="0.5" y="0.5" width="14" height="14" fill="#A9B6C4" stroke="#8E9CAE"/><rect x="3" y="1.5" width="9" height="5" fill="#C5CFDA"/><rect x="4" y="9" width="7" height="5.5" fill="#8E9CAE"/><rect x="5.5" y="10.5" width="2" height="3" fill="#C5CFDA"/></svg>
<div class="a" style="left:79px;top:53px;width:1px;height:19px;background:#CFC8AC"></div><div class="a" style="left:80px;top:53px;width:1px;height:19px;background:#FDFBF2"></div>
<svg class="a" style="left:87px;top:54px;" width="13" height="16" viewBox="0 0 13 16"><path d="M2.5 0.5 L8.5 10 M10.5 0.5 L4.5 10" stroke="#8FA2B6" stroke-width="2"/><circle cx="3.3" cy="12" r="2.3" fill="none" stroke="#8FA2B6" stroke-width="1.5"/><circle cx="9.7" cy="12" r="2.3" fill="none" stroke="#8FA2B6" stroke-width="1.5"/></svg>
<svg class="a" style="left:109px;top:54px;" width="16" height="16" viewBox="0 0 16 16"><path d="M0.5 0.5 H5.5 L8.5 3.5 V9.5 H0.5 Z" fill="#E4EAF0" stroke="#9AA8B8"/><path d="M6.5 5.5 H11.5 L14.5 8.5 V15.5 H6.5 Z" fill="#EEF2F6" stroke="#9AA8B8"/><path d="M8 10 H13" stroke="#9AA8B8" stroke-width="1"/><path d="M8 12 H13" stroke="#9AA8B8" stroke-width="1"/><path d="M8 14 H13" stroke="#9AA8B8" stroke-width="1"/></svg>
<svg class="a" style="left:132px;top:54px;" width="16" height="16" viewBox="0 0 16 16"><rect x="0.5" y="2.5" width="12" height="13" fill="#B8C2CE" stroke="#9AA8B8"/><rect x="3.5" y="0.5" width="6" height="4" fill="#C8D0DA" stroke="#9AA8B8"/><rect x="6.5" y="6.5" width="8" height="9" fill="#D7DEE6" stroke="#9AA8B8"/><path d="M8 9 H13" stroke="#9AA8B8" stroke-width="1"/><path d="M8 11 H13" stroke="#9AA8B8" stroke-width="1"/><path d="M8 13 H13" stroke="#9AA8B8" stroke-width="1"/></svg>
<div class="a" style="left:153px;top:53px;width:1px;height:19px;background:#CFC8AC"></div><div class="a" style="left:154px;top:53px;width:1px;height:19px;background:#FDFBF2"></div>
<svg class="a" style="left:161px;top:55px;" width="16" height="15" viewBox="0 0 16 15"><rect x="3.5" y="0.5" width="8" height="5" fill="#D3D6DA" stroke="#A4A8AE"/><rect x="0.5" y="5.5" width="14" height="7" rx="1.5" fill="#B9BDC3" stroke="#9DA1A8"/><rect x="3.5" y="9.5" width="8" height="4.5" fill="#CDD0D4" stroke="#9DA1A8"/><path d="M4.5 11.5 H10.5" stroke="#8A8E95"/></svg>
<svg class="a" style="left:183px;top:54px;" width="16" height="16" viewBox="0 0 16 16"><path d="M0.5 0.5 H7.5 L10.5 3.5 V13.5 H0.5 Z" fill="#BAC4D0" stroke="#A0ACBA"/><circle cx="9.5" cy="9.5" r="3.2" fill="#D8DEE6" stroke="#A7A9A6" stroke-width="1.2"/><path d="M12 12 L14.5 15" stroke="#B4A896" stroke-width="2"/></svg>
<div class="a" style="left:204px;top:53px;width:1px;height:19px;background:#CFC8AC"></div><div class="a" style="left:205px;top:53px;width:1px;height:19px;background:#FDFBF2"></div>
<svg class="a" style="left:215px;top:56px;" width="11" height="11" viewBox="0 0 11 11"><path d="M0.5 4.5 L5 0.5 V3 C9 3 10.5 6 10 10 C9 7.5 8 6.5 5 6.5 V9 Z" fill="#A5B9A6"/></svg>
<svg class="a" style="left:236px;top:56px;" width="11" height="11" viewBox="0 0 11 11"><path d="M10.5 4.5 L6 0.5 V3 C2 3 0.5 6 1 10 C2 7.5 3 6.5 6 6.5 V9 Z" fill="#B4C4B5"/></svg>
<div class="a" style="left:255px;top:53px;width:1px;height:19px;background:#CFC8AC"></div><div class="a" style="left:256px;top:53px;width:1px;height:19px;background:#FDFBF2"></div>
<svg class="a" style="left:264px;top:55px;" width="15" height="15" viewBox="0 0 15 15"><circle cx="6" cy="6" r="4.8" fill="#DCEBF8" stroke="#8E9CB0" stroke-width="1.3"/><path d="M4 4.5 A3 3 0 0 1 7 3.2" stroke="#fff" stroke-width="1.2" fill="none"/><path d="M9.6 9.6 L13.6 13.6" stroke="#B08A60" stroke-width="2.4" stroke-linecap="round"/></svg>
<div class="a" style="left:282px;top:52px;width:150px;height:19px;background:#fff;border:1px solid #B9AE86;border-radius:3px"></div>
<div class="a" style="left:401px;top:53px;width:15px;height:17px;background:linear-gradient(#FBF8EA,#EEE6C8);border-left:1px solid #D6CDA6"></div>
<div class="a" style="left:416px;top:53px;width:15px;height:17px;background:linear-gradient(#FBF8EA,#EEE6C8);border-left:1px solid #D6CDA6;border-radius:0 2px 2px 0"></div>
<div class="dd" style="left:405px;top:60px;border-top-color:#5A4200"></div>
<svg class="a" style="left:419px;top:57px;" width="10" height="10" viewBox="0 0 10 10"><path d="M1.5 1.5 L8.5 8.5 M8.5 1.5 L1.5 8.5" stroke="#5A4200" stroke-width="1.8"/></svg>
<div class="t" style="left:285px;top:55px;font-size:11px;color:#000">5</div>
<svg class="a" style="left:436px;top:54px;" width="17" height="15" viewBox="0 0 17 15"><g ><path d="M1.5 6 C3 1.5 10 0.5 14 4" fill="none" stroke="#3A78A8" stroke-width="1.6"/><path d="M15.5 1.5 L15 6 L11 4.5 Z" fill="#3A78A8"/><circle cx="7" cy="8" r="3.3" fill="#E4EEF6" stroke="#8E98A8" stroke-width="1.1"/><path d="M9.5 10.5 L12 13.5" stroke="#B07A60" stroke-width="1.8" stroke-linecap="round"/></g></svg>
<svg class="a" style="left:458px;top:54px;" width="17" height="15" viewBox="0 0 17 15"><g transform="translate(17,0) scale(-1,1)"><path d="M1.5 6 C3 1.5 10 0.5 14 4" fill="none" stroke="#3A78A8" stroke-width="1.6"/><path d="M15.5 1.5 L15 6 L11 4.5 Z" fill="#3A78A8"/><circle cx="7" cy="8" r="3.3" fill="#E4EEF6" stroke="#8E98A8" stroke-width="1.1"/><path d="M9.5 10.5 L12 13.5" stroke="#B07A60" stroke-width="1.8" stroke-linecap="round"/></g></svg>
<div class="a" style="left:480px;top:53px;width:1px;height:19px;background:#CFC8AC"></div><div class="a" style="left:481px;top:53px;width:1px;height:19px;background:#FDFBF2"></div>
<svg class="a" style="left:488px;top:55px;" width="15" height="15" viewBox="0 0 15 15"><rect x="0.5" y="0.5" width="9" height="8" fill="#DDE6F0" stroke="#5A7896"/><rect x="2.5" y="2.5" width="9" height="8" fill="#E8EEF5" stroke="#5A7896"/><rect x="4.5" y="4.5" width="9" height="8" fill="#F4F7FA" stroke="#7A92AA"/></svg>
<div class="a" style="left:508px;top:53px;width:1px;height:19px;background:#CFC8AC"></div><div class="a" style="left:509px;top:53px;width:1px;height:19px;background:#FDFBF2"></div>
<svg class="a" style="left:514px;top:53px;" width="18" height="18" viewBox="0 0 18 18"><defs><radialGradient id="ig" cx="0.4" cy="0.3" r="0.8"><stop offset="0" stop-color="#FFF3D6"/><stop offset="0.6" stop-color="#F2C87A"/><stop offset="1" stop-color="#D89A3C"/></radialGradient></defs><circle cx="9" cy="9" r="8" fill="url(#ig)" stroke="#C08A3A" stroke-width="0.8"/><rect x="8" y="7" width="2.2" height="7" fill="#4E8A1E"/><circle cx="9.1" cy="4.6" r="1.4" fill="#4E8A1E"/></svg>
<div class="dd" style="left:537px;top:67px"></div>
<div class="grip" style="left:553px;top:55px;height:13px"></div>
<svg class="a" style="left:563px;top:54px;" width="14" height="16" viewBox="0 0 14 16"><rect x="0.5" y="0.5" width="12" height="14" fill="#F7EBD0" stroke="#8A7A5A"/><rect x="2" y="2" width="9" height="2.5" fill="#5C9A4A"/><rect x="2" y="6.0" width="2" height="1.6" fill="#8A5A3A"/><rect x="2" y="8.5" width="2" height="1.6" fill="#8A5A3A"/><rect x="2" y="11.0" width="2" height="1.6" fill="#8A5A3A"/><rect x="5" y="6.0" width="2" height="1.6" fill="#8A5A3A"/><rect x="5" y="8.5" width="2" height="1.6" fill="#8A5A3A"/><rect x="5" y="11.0" width="2" height="1.6" fill="#8A5A3A"/><rect x="8" y="6.0" width="2" height="1.6" fill="#8A5A3A"/><rect x="8" y="8.5" width="2" height="1.6" fill="#8A5A3A"/><rect x="8" y="11.0" width="2" height="1.6" fill="#8A5A3A"/></svg>
<svg class="a" style="left:586px;top:54px;" width="14" height="16" viewBox="0 0 14 16"><rect x="0.5" y="0.5" width="12" height="14" fill="#FFF6EA" stroke="#C08A5A"/><rect x="0.5" y="0.5" width="12" height="3.5" fill="#F0B078" stroke="#C08A5A"/><text x="1.6" y="13" font-family="Liberation Sans" font-size="9" fill="#C83A1E">31</text></svg>
<svg class="a" style="left:608px;top:54px;" width="16" height="16" viewBox="0 0 16 16"><circle cx="5.5" cy="3.8" r="3" fill="#E9A64A" stroke="#B8782A" stroke-width="0.6"/><path d="M0.5 13.5 C0.5 8 10.5 8 10.5 13.5 Z" fill="#3E7EC8"/><rect x="8.5" y="9.5" width="6" height="5" fill="#E8ECF2" stroke="#7A8494"/><path d="M9.8 9.5 V7.8 A1.7 1.7 0 0 1 13.2 7.8 V9.5" fill="none" stroke="#7A8494" stroke-width="1.1"/></svg>
<div class="a" style="left:629px;top:53px;width:1px;height:19px;background:#CFC8AC"></div><div class="a" style="left:630px;top:53px;width:1px;height:19px;background:#FDFBF2"></div>
<div class="t" style="left:638px;top:55px;font-weight:bold;font-size:12px;color:#7A4A2E;line-height:14px">M</div>
<div class="t" style="left:658px;top:55px;font-weight:bold;font-size:12px;color:#7A4A2E;line-height:14px">M+</div>
<div class="t" style="left:681px;top:55px;font-weight:bold;font-size:12px;color:#7A4A2E;line-height:14px">M−</div>
<div class="a" style="left:702px;top:53px;width:1px;height:19px;background:#CFC8AC"></div><div class="a" style="left:703px;top:53px;width:1px;height:19px;background:#FDFBF2"></div>
<svg class="a" style="left:712px;top:53px;" width="12" height="18" viewBox="0 0 12 18"><path d="M2 1 V5 A4 4 0 0 0 4.3 8 V15.5 A1.6 1.6 0 0 0 7.7 15.5 V8 A4 4 0 0 0 10 5 V1 L8 1 V5 H4 V1 Z" fill="#D8DCE2" stroke="#7E8692" stroke-width="0.9"/></svg>
<div class="dd" style="left:731px;top:67px"></div>
<div class="grip" style="left:3px;top:81px;height:13px"></div>
<svg class="a" style="left:14px;top:80px;" width="13" height="16" viewBox="0 0 13 16"><path d="M4 2.5 V0.5 H8 V2.5" fill="none" stroke="#8C93A0"/><rect x="0.5" y="2.5" width="11" height="12.5" fill="#F0F2F7" stroke="#8C93A0"/><path d="M3 4 V14.5 M5.500 4 V14.5 M8 4 V14.5 M1 5.5 H11 M1 8.0 H11 M1 10.5 H11 M1 13.0 H11 " stroke="#B4BAC8" stroke-width="0.9"/></svg>
<div class="t" style="left:30px;top:82px;">Установить текущее учреждение (F11)</div>
<div class="dd" style="left:232px;top:93px"></div>
<div class="grip" style="left:3px;top:107px;height:13px"></div>
<svg class="a" style="left:14px;top:105px;" width="16" height="17" viewBox="0 0 16 17"><defs><linearGradient id="st1" x1="0" y1="0" x2="0" y2="1"><stop offset="0" stop-color="#F2F4F8"/><stop offset="1" stop-color="#AEB4C0"/></linearGradient></defs><path d="M0.5 5.5 H10.5 L13.5 8 V15.5 H0.5 Z" fill="url(#st1)" stroke="#9A9FAA"/><path d="M5 6 V15.5 M9.500 6 V15.5" stroke="#9A9FAA" stroke-width="0.9"/><path d="M0.5 15.5 H13.5" stroke="#7E838E"/><text x="-0.5" y="8.5" font-family="Liberation Serif" font-weight="bold" font-size="10.5" fill="#C83030" stroke="#F3EFDD" stroke-width="1.2" paint-order="stroke">Σ</text></svg>
<svg class="a" style="left:37px;top:106px;" width="18" height="17" viewBox="0 0 18 17"><defs><linearGradient id="g227" x1="0" y1="0" x2="0" y2="1"><stop offset="0" stop-color="#F6F7FA"/><stop offset="0.55" stop-color="#DADDE4"/><stop offset="1" stop-color="#B4B9C4"/></linearGradient></defs><path d="M0.5 1.5 H10 L13.5 5 V14.5 H0.5 Z" fill="url(#g227)" stroke="#9A9FAA" stroke-width="1"/><path d="M10 1.5 V5 H13.5 Z" fill="#fff" stroke="#9A9FAA" stroke-width="0.8"/><path d="M0.5 14.5 H13.5" stroke="#7E838E" stroke-width="1"/><path d="M1 5.5 H10 M4.500 2 V14 M8.500 5 V14" stroke="#9A9FAA" stroke-width="0.9"/><rect x="1" y="6" width="3.5" height="8" fill="#B4BAC6"/><text x="9.5" y="16" font-family="Liberation Serif" font-weight="bold" font-size="10" fill="#0A1478" stroke="#fff" stroke-width="1.6" paint-order="stroke" stroke-linejoin="round">T</text></svg>
<svg class="a" style="left:60px;top:106px;" width="18" height="17" viewBox="0 0 18 17"><defs><linearGradient id="g228" x1="0" y1="0" x2="0" y2="1"><stop offset="0" stop-color="#F6F7FA"/><stop offset="0.55" stop-color="#DADDE4"/><stop offset="1" stop-color="#B4B9C4"/></linearGradient></defs><path d="M0.5 1.5 H10 L13.5 5 V14.5 H0.5 Z" fill="url(#g228)" stroke="#9A9FAA" stroke-width="1"/><path d="M10 1.5 V5 H13.5 Z" fill="#fff" stroke="#9A9FAA" stroke-width="0.8"/><path d="M0.5 14.5 H13.5" stroke="#7E838E" stroke-width="1"/><path d="M2 9 C2 5.500 4 4.300 6 4.300 V2.300 L9.600 5.300 L6 8.300 V6.300 C4.600 6.300 3.600 7 3.200 9 Z" fill="#D83030"/><path d="M9.800 6.500 H11.400 V11.200 H8 V13 L4.500 10.300 L8 7.600 V9.600 H9.800 Z" fill="#1A2AB0"/></svg>
<svg class="a" style="left:82px;top:105px;" width="18" height="18" viewBox="0 0 18 18"><defs><linearGradient id="m4" x1="0" y1="0" x2="0" y2="1"><stop offset="0" stop-color="#F6F7FA"/><stop offset="1" stop-color="#B4B9C4"/></linearGradient></defs><path d="M3.5 3.5 H10.5 L14.5 7.5 V15.5 H3.5 Z" fill="url(#m4)" stroke="#9A9FAA"/><path d="M10.5 3.5 V7.5 H14.5 Z" fill="#fff" stroke="#9A9FAA" stroke-width="0.8"/><path d="M4 10.5 H13" stroke="#8A8F9C" stroke-width="1.2"/><path d="M4 12.5 H13" stroke="#8A8F9C" stroke-width="1.2"/><path d="M4 14.5 H13" stroke="#8A8F9C" stroke-width="1.2"/><circle cx="4.600" cy="4.200" r="3.600" fill="#EEF3F8" stroke="#8A8F9C" stroke-width="1.1"/><path d="M2.200 7 L0.600 9" stroke="#A8845A" stroke-width="1.600"/><text x="9.5" y="17" font-family="Liberation Serif" font-weight="bold" font-size="10" fill="#0A1478" stroke="#fff" stroke-width="1.6" paint-order="stroke" stroke-linejoin="round">T</text></svg>
<svg class="a" style="left:105px;top:105px;" width="18" height="18" viewBox="0 0 18 18"><defs><linearGradient id="m5" x1="0" y1="0" x2="0" y2="1"><stop offset="0" stop-color="#F6F7FA"/><stop offset="1" stop-color="#B4B9C4"/></linearGradient></defs><path d="M3.5 3.5 H10.5 L14.5 7.5 V15.5 H3.5 Z" fill="url(#m5)" stroke="#9A9FAA"/><path d="M10.5 3.5 V7.5 H14.5 Z" fill="#fff" stroke="#9A9FAA" stroke-width="0.8"/><path d="M4 10.5 H9" stroke="#8A8F9C" stroke-width="1.2"/><path d="M4 12.5 H9" stroke="#8A8F9C" stroke-width="1.2"/><path d="M4 14.5 H9" stroke="#8A8F9C" stroke-width="1.2"/><circle cx="4.600" cy="4.200" r="3.600" fill="#EEF3F8" stroke="#8A8F9C" stroke-width="1.1"/><path d="M2.200 7 L0.600 9" stroke="#A8845A" stroke-width="1.600"/><path d="M10.5 9.5 H16" stroke="#176A7A" stroke-width="1.3"/><path d="M10.5 11.5 H16" stroke="#176A7A" stroke-width="1.3"/><path d="M10.5 13.5 H16" stroke="#176A7A" stroke-width="1.3"/><path d="M10.5 15.5 H16" stroke="#176A7A" stroke-width="1.3"/></svg>
<svg class="a" style="left:129px;top:106px;" width="18" height="17" viewBox="0 0 18 17"><defs><linearGradient id="g231" x1="0" y1="0" x2="0" y2="1"><stop offset="0" stop-color="#F6F7FA"/><stop offset="0.55" stop-color="#DADDE4"/><stop offset="1" stop-color="#B4B9C4"/></linearGradient></defs><path d="M0.5 1.5 H10 L13.5 5 V14.5 H0.5 Z" fill="url(#g231)" stroke="#9A9FAA" stroke-width="1"/><path d="M10 1.5 V5 H13.5 Z" fill="#fff" stroke="#9A9FAA" stroke-width="0.8"/><path d="M0.5 14.5 H13.5" stroke="#7E838E" stroke-width="1"/><path d="M2 6.5 H11" stroke="#8A8F9C" stroke-width="1.2"/><path d="M2 8.5 H11" stroke="#8A8F9C" stroke-width="1.2"/><path d="M2 10.5 H11" stroke="#8A8F9C" stroke-width="1.2"/><path d="M2 12.5 H11" stroke="#8A8F9C" stroke-width="1.2"/><text x="9.5" y="16" font-family="Liberation Serif" font-weight="bold" font-size="10" fill="#0A1478" stroke="#fff" stroke-width="1.6" paint-order="stroke" stroke-linejoin="round">T</text></svg>
<svg class="a" style="left:152px;top:106px;" width="18" height="17" viewBox="0 0 18 17"><defs><linearGradient id="g232" x1="0" y1="0" x2="0" y2="1"><stop offset="0" stop-color="#F6F7FA"/><stop offset="0.55" stop-color="#DADDE4"/><stop offset="1" stop-color="#B4B9C4"/></linearGradient></defs><path d="M0.5 1.5 H10 L13.5 5 V14.5 H0.5 Z" fill="url(#g232)" stroke="#9A9FAA" stroke-width="1"/><path d="M10 1.5 V5 H13.5 Z" fill="#fff" stroke="#9A9FAA" stroke-width="0.8"/><path d="M0.5 14.5 H13.5" stroke="#7E838E" stroke-width="1"/><path d="M2 6.5 H8" stroke="#8A8F9C" stroke-width="1.2"/><path d="M2 8.5 H8" stroke="#8A8F9C" stroke-width="1.2"/><path d="M2 10.5 H8" stroke="#8A8F9C" stroke-width="1.2"/><path d="M2 12.5 H8" stroke="#8A8F9C" stroke-width="1.2"/><path d="M9.5 8.5 H15" stroke="#176A7A" stroke-width="1.3"/><path d="M9.5 10.5 H15" stroke="#176A7A" stroke-width="1.3"/><path d="M9.5 12.5 H15" stroke="#176A7A" stroke-width="1.3"/><path d="M9.5 14.5 H15" stroke="#176A7A" stroke-width="1.3"/></svg>
<svg class="a" style="left:175px;top:106px;" width="18" height="17" viewBox="0 0 18 17"><defs><linearGradient id="g233" x1="0" y1="0" x2="0" y2="1"><stop offset="0" stop-color="#F6F7FA"/><stop offset="0.55" stop-color="#DADDE4"/><stop offset="1" stop-color="#B4B9C4"/></linearGradient></defs><path d="M0.5 1.5 H10 L13.5 5 V14.5 H0.5 Z" fill="url(#g233)" stroke="#9A9FAA" stroke-width="1"/><path d="M10 1.5 V5 H13.5 Z" fill="#fff" stroke="#9A9FAA" stroke-width="0.8"/><path d="M0.5 14.5 H13.5" stroke="#7E838E" stroke-width="1"/><path d="M2 9 C2 5.500 4 4.300 6 4.300 V2.300 L9.600 5.300 L6 8.300 V6.300 C4.600 6.300 3.600 7 3.200 9 Z" fill="#D83030"/><path d="M9.800 6.500 H11.400 V11.200 H8 V13 L4.500 10.300 L8 7.600 V9.600 H9.800 Z" fill="#1A2AB0"/><text x="9.5" y="16" font-family="Liberation Serif" font-weight="bold" font-size="10" fill="#0A1478" stroke="#fff" stroke-width="1.6" paint-order="stroke" stroke-linejoin="round">T</text></svg>
<svg class="a" style="left:198px;top:106px;" width="18" height="17" viewBox="0 0 18 17"><defs><linearGradient id="g234" x1="0" y1="0" x2="0" y2="1"><stop offset="0" stop-color="#F6F7FA"/><stop offset="0.55" stop-color="#DADDE4"/><stop offset="1" stop-color="#B4B9C4"/></linearGradient></defs><path d="M0.5 1.5 H10 L13.5 5 V14.5 H0.5 Z" fill="url(#g234)" stroke="#9A9FAA" stroke-width="1"/><path d="M10 1.5 V5 H13.5 Z" fill="#fff" stroke="#9A9FAA" stroke-width="0.8"/><path d="M0.5 14.5 H13.5" stroke="#7E838E" stroke-width="1"/><path d="M2 9 C2 5.500 4 4.300 6 4.300 V2.300 L9.600 5.300 L6 8.300 V6.300 C4.600 6.300 3.600 7 3.200 9 Z" fill="#D83030"/><path d="M9.800 6.500 H11.400 V11.200 H8 V13 L4.500 10.300 L8 7.600 V9.600 H9.800 Z" fill="#1A2AB0"/><path d="M10 8.5 H15.5" stroke="#176A7A" stroke-width="1.3"/><path d="M10 10.5 H15.5" stroke="#176A7A" stroke-width="1.3"/><path d="M10 12.5 H15.5" stroke="#176A7A" stroke-width="1.3"/><path d="M10 14.5 H15.5" stroke="#176A7A" stroke-width="1.3"/></svg>
<svg class="a" style="left:221px;top:106px;" width="18" height="17" viewBox="0 0 18 17"><defs><linearGradient id="g235" x1="0" y1="0" x2="0" y2="1"><stop offset="0" stop-color="#F6F7FA"/><stop offset="0.55" stop-color="#DADDE4"/><stop offset="1" stop-color="#B4B9C4"/></linearGradient></defs><path d="M0.5 1.5 H10 L13.5 5 V14.5 H0.5 Z" fill="url(#g235)" stroke="#9A9FAA" stroke-width="1"/><path d="M10 1.5 V5 H13.5 Z" fill="#fff" stroke="#9A9FAA" stroke-width="0.8"/><path d="M0.5 14.5 H13.5" stroke="#7E838E" stroke-width="1"/><text x="2" y="8" font-family="Liberation Sans" font-weight="bold" font-size="7" fill="#1A2AB0">Д</text><text x="7" y="8" font-family="Liberation Sans" font-weight="bold" font-size="7" fill="#D02020">К</text><path d="M6 10.5 H12" stroke="#8A8F9C" stroke-width="1.2"/><path d="M6 12.5 H12" stroke="#8A8F9C" stroke-width="1.2"/><text x="-0.5" y="15.5" font-family="Liberation Serif" font-weight="bold" font-size="10" fill="#C83030">Σ</text></svg>
<svg class="a" style="left:244px;top:106px;" width="18" height="17" viewBox="0 0 18 17"><defs><linearGradient id="g236" x1="0" y1="0" x2="0" y2="1"><stop offset="0" stop-color="#F6F7FA"/><stop offset="0.55" stop-color="#DADDE4"/><stop offset="1" stop-color="#B4B9C4"/></linearGradient></defs><path d="M0.5 1.5 H10 L13.5 5 V14.5 H0.5 Z" fill="url(#g236)" stroke="#9A9FAA" stroke-width="1"/><path d="M10 1.5 V5 H13.5 Z" fill="#fff" stroke="#9A9FAA" stroke-width="0.8"/><path d="M0.5 14.5 H13.5" stroke="#7E838E" stroke-width="1"/><text x="2" y="8" font-family="Liberation Sans" font-weight="bold" font-size="7" fill="#1A2AB0">Д</text><text x="7" y="8" font-family="Liberation Sans" font-weight="bold" font-size="7" fill="#D02020">К</text><path d="M2 10 H12" stroke="#8A8F9C" stroke-width="1.2"/><path d="M2 12 H12" stroke="#8A8F9C" stroke-width="1.2"/><path d="M2 13.8 H12" stroke="#8A8F9C" stroke-width="1.2"/></svg>
<svg class="a" style="left:267px;top:106px;" width="18" height="17" viewBox="0 0 18 17"><defs><linearGradient id="g237" x1="0" y1="0" x2="0" y2="1"><stop offset="0" stop-color="#F6F7FA"/><stop offset="0.55" stop-color="#DADDE4"/><stop offset="1" stop-color="#B4B9C4"/></linearGradient></defs><path d="M0.5 1.5 H10 L13.5 5 V14.5 H0.5 Z" fill="url(#g237)" stroke="#9A9FAA" stroke-width="1"/><path d="M10 1.5 V5 H13.5 Z" fill="#fff" stroke="#9A9FAA" stroke-width="0.8"/><path d="M0.5 14.5 H13.5" stroke="#7E838E" stroke-width="1"/><rect x="2" y="8" width="10" height="6" fill="#F0EAD0"/><rect x="2" y="8" width="2" height="2" fill="#5E5638"/><rect x="2" y="12" width="2" height="2" fill="#5E5638"/><rect x="4" y="10" width="2" height="2" fill="#5E5638"/><rect x="6" y="8" width="2" height="2" fill="#5E5638"/><rect x="6" y="12" width="2" height="2" fill="#5E5638"/><rect x="8" y="10" width="2" height="2" fill="#5E5638"/><rect x="10" y="8" width="2" height="2" fill="#5E5638"/><rect x="10" y="12" width="2" height="2" fill="#5E5638"/></svg>
<div class="a" style="left:287px;top:104px;width:1px;height:19px;background:#CFC8AC"></div><div class="a" style="left:288px;top:104px;width:1px;height:19px;background:#FDFBF2"></div>
<svg class="a" style="left:296px;top:107px;" width="16" height="15" viewBox="0 0 16 15"><path d="M0.5 9.5 L5 1 L9.5 9.5 Z" fill="#F2B24A" stroke="#C8861E" stroke-width="0.8"/><rect x="4.5" y="3.8" width="1.1" height="3.2" fill="#7A4A10"/><rect x="4.5" y="7.6" width="1.1" height="1" fill="#7A4A10"/><circle cx="10" cy="5" r="2.8" fill="#E8B07A" stroke="#A8683A" stroke-width="0.6"/><path d="M7.200 4.600 A2.800 2.800 0 0 1 12.800 4.600 C11.500 3.600 9 3.400 7.200 4.600 Z" fill="#3A2A1A"/><path d="M5 14.5 C5 9 15 9 15 14.5 Z" fill="#2A58B8"/><path d="M9 10 L10 12.5 L11 10 Z" fill="#fff"/></svg>
<div class="t" style="left:312px;top:108px;">Руководителю</div>
<div class="dd" style="left:391px;top:118px"></div>
<div class="grip" style="left:410px;top:107px;height:13px"></div>
<svg class="a" style="left:418px;top:106px;" width="16" height="16" viewBox="0 0 16 16"><defs><radialGradient id="gl" cx="0.35" cy="0.3" r="0.8"><stop offset="0" stop-color="#9AD0F4"/><stop offset="1" stop-color="#2A6AB8"/></radialGradient></defs><circle cx="7.5" cy="7.5" r="7" fill="url(#gl)" stroke="#2A5A98" stroke-width="0.7"/><path d="M3 4 C5 2 8 3 7 5.5 C6 8 3 7 3 9.5 C2 8 1.8 5.5 3 4 Z M9 6 C11 5 13 6 13.5 8 C12.5 11 10.5 12 9.5 10 C9 8.5 8.5 7 9 6 Z" fill="#5CB04A"/><path d="M6 10.5 L9 13.5 L14.5 7.5" fill="none" stroke="#E8B82A" stroke-width="2.4"/><path d="M6 10.5 L9 13.5 L14.5 7.5" fill="none" stroke="#FBE27A" stroke-width="1"/></svg>
<div class="t" style="left:435px;top:108px;">Интернет-поддержка</div>
<div class="dds" style="left:544px;top:113px"></div>
<div class="dd" style="left:555px;top:118px"></div>
<svg class="a" style="left:5px;top:130px;" width="14" height="15" viewBox="0 0 14 15"><path d="M0.5 2 H8 M4 2 V9.5" stroke="#4A86B4" stroke-width="1.6" fill="none"/><path d="M5.5 5.5 H13 M9 5.5 V14.5" stroke="#4A86B4" stroke-width="1.6" fill="none"/></svg>
<div class="a" style="left:1384px;top:141px;width:8px;height:2px;background:#222"></div>
<svg class="a" style="left:1401px;top:131px;" width="14" height="13" viewBox="0 0 14 13"><path d="M4.500 4 V1.700 H11.500 V8.300 H9" fill="none" stroke="#222" stroke-width="1"/><path d="M4.500 2 H11.500" stroke="#222" stroke-width="1.6"/><rect x="1.500" y="4.800" width="7" height="6.700" fill="none" stroke="#222" stroke-width="1"/><path d="M1.500 5 H8.500" stroke="#222" stroke-width="1.6"/></svg>
<svg class="a" style="left:1423px;top:132px;" width="12" height="12" viewBox="0 0 12 12"><path d="M1.5 1.5 L10 10 M10 1.5 L1.5 10" stroke="#222" stroke-width="1.8"/></svg>
<div class="t" style="left:16px;top:181px;">Действия</div>
<div class="dds" style="left:69px;top:186px"></div>
<div class="a" style="left:79px;top:178px;width:1px;height:19px;background:#CFC8AC"></div><div class="a" style="left:80px;top:178px;width:1px;height:19px;background:#FDFBF2"></div>
<svg class="a" style="left:85px;top:178px;" width="18" height="18" viewBox="0 0 18 18"><defs><radialGradient id="pg" cx="0.4" cy="0.3" r="0.8"><stop offset="0" stop-color="#DCEFC8"/><stop offset="0.6" stop-color="#93C274"/><stop offset="1" stop-color="#64A04E"/></radialGradient></defs><circle cx="9" cy="9" r="8" fill="url(#pg)" stroke="#5A8A4A" stroke-width="0.8"/><path d="M9 4.5 V13.5 M4.5 9 H13.5" stroke="#fff" stroke-width="2.4"/></svg>
<div class="t" style="left:104px;top:181px;"><u>Д</u>обавить</div>
<svg class="a" style="left:169px;top:179px;" width="16" height="17" viewBox="0 0 16 17"><path d="M0.5 0.5 H7.5 L10.5 3.5 V13.5 H0.5 Z" fill="#EEF2F8" stroke="#8FA0B8"/><path d="M2 5.5 H8" stroke="#A8B4C4" stroke-width="1"/><path d="M2 7.5 H8" stroke="#A8B4C4" stroke-width="1"/><path d="M2 9.5 H8" stroke="#A8B4C4" stroke-width="1"/><circle cx="11" cy="12" r="4.2" fill="#7DB55A" stroke="#4E8A3A" stroke-width="0.8"/><path d="M11 9.6 V14.4 M8.6 12 H13.4" stroke="#fff" stroke-width="1.6"/></svg>
<svg class="a" style="left:192px;top:180px;" width="14" height="14" viewBox="0 0 14 14"><path d="M1 13 L2.5 8.5 L10 1 L13 4 L5.5 11.5 Z" fill="#4E9A3A" stroke="#2E6A22" stroke-width="0.8"/><path d="M1 13 L2.5 8.5 L5.5 11.5 Z" fill="#F2DCA8" stroke="#8A7A4A" stroke-width="0.6"/></svg>
<svg class="a" style="left:215px;top:179px;" width="14" height="17" viewBox="0 0 14 17"><path d="M0.5 0.5 H8.5 L12.5 4.5 V15.5 H0.5 Z" fill="#F7F9FC" stroke="#8FA0B8"/><path d="M8.5 0.5 V4.5 H12.5" fill="#E4EAF2" stroke="#8FA0B8" stroke-width="0.8"/><path d="M3.5 6.5 L9.5 12.5 M9.5 6.5 L3.5 12.5" stroke="#C8202A" stroke-width="2.2"/></svg>
<div class="a" style="left:235px;top:178px;width:1px;height:19px;background:#CFC8AC"></div><div class="a" style="left:236px;top:178px;width:1px;height:19px;background:#FDFBF2"></div>
<svg class="a" style="left:243px;top:179px;" width="15" height="16" viewBox="0 0 15 16"><path d="M0.5 1.5 H5 L6 3 H10.5 V8.5 H0.5 Z" fill="#F1D36A" stroke="#B89632"/><path d="M3 8.5 V12.5 H5" stroke="#6A6A6A" fill="none"/><rect x="5.5" y="10.5" width="9" height="4" fill="#9CC0E4" stroke="#5A88B8"/></svg>
<div class="a" style="left:263px;top:178px;width:1px;height:19px;background:#CFC8AC"></div><div class="a" style="left:264px;top:178px;width:1px;height:19px;background:#FDFBF2"></div>
<svg class="a" style="left:270px;top:179px;" width="17" height="17" viewBox="0 0 17 17"><path d="M1.5 1 H13.5 V3 L9 8 V14 L6 12 V8 L1.5 3 Z" fill="#E8ECF2" stroke="#6E7A8A" stroke-width="1"/><rect x="1" y="6" width="4" height="9" fill="#F4F6FA" stroke="#8E94A2" stroke-width="0.8"/><path d="M13 5 V15 M11 12.5 L13 15.5 L15 12.5" stroke="#222" stroke-width="1.2" fill="none"/></svg>
<svg class="a" style="left:293px;top:179px;" width="17" height="17" viewBox="0 0 17 17"><path d="M1.5 1 H13.5 V3 L9 8 V14 L6 12 V8 L1.5 3 Z" fill="#E8ECF2" stroke="#6E7A8A" stroke-width="1"/><rect x="8.5" y="8.5" width="6" height="7" fill="#F4F8FC" stroke="#6A8AB8" stroke-width="0.8"/><path d="M9.8 12 L11.2 13.6 L13.4 10" stroke="#2A5AA8" stroke-width="1.2" fill="none"/></svg>
<svg class="a" style="left:315px;top:179px;" width="17" height="17" viewBox="0 0 17 17"><path d="M1.5 1 H13.5 V3 L9 8 V14 L6 12 V8 L1.5 3 Z" fill="#E8ECF2" stroke="#6E7A8A" stroke-width="1"/><rect x="1" y="6" width="5" height="9" fill="#F4F6FA" stroke="#8E94A2" stroke-width="0.8"/><rect x="9.5" y="7.5" width="5.5" height="8" fill="#EAF0F8" stroke="#6A8AB8" stroke-width="0.8"/><path d="M10.5 10 H14" stroke="#6A8AB8" stroke-width="0.8"/><path d="M10.5 12 H14" stroke="#6A8AB8" stroke-width="0.8"/><path d="M10.5 14 H14" stroke="#6A8AB8" stroke-width="0.8"/></svg>
<div class="dds" style="left:334px;top:186px"></div>
<svg class="a" style="left:346px;top:179px;" width="17" height="17" viewBox="0 0 17 17"><path d="M1.5 1 H13.5 V3 L9 8 V14 L6 12 V8 L1.5 3 Z" fill="#DADDE0" stroke="#A8ACB0" stroke-width="1"/><path d="M9 9 L15 15 M15 9 L9 15" stroke="#C89A98" stroke-width="2"/></svg>
<div class="a" style="left:367px;top:178px;width:1px;height:19px;background:#CFC8AC"></div><div class="a" style="left:368px;top:178px;width:1px;height:19px;background:#FDFBF2"></div>
<div class="t" style="left:374px;top:181px;">Перейти</div>
<div class="dds" style="left:420px;top:186px"></div>
<div class="a" style="left:431px;top:178px;width:1px;height:19px;background:#CFC8AC"></div><div class="a" style="left:432px;top:178px;width:1px;height:19px;background:#FDFBF2"></div>
<svg class="a" style="left:439px;top:180px;" width="15" height="15" viewBox="0 0 15 15"><path d="M2.5 7 A5 5 0 0 1 11.5 4" fill="none" stroke="#2E8A2E" stroke-width="2"/><path d="M9.5 1 L13.8 3.4 L10.6 6.8 Z" fill="#2E8A2E"/><path d="M12.5 8 A5 5 0 0 1 3.5 11" fill="none" stroke="#2E8A2E" stroke-width="2"/><path d="M5.5 14 L1.2 11.6 L4.4 8.2 Z" fill="#2E8A2E"/></svg>
<div class="a" style="left:459px;top:178px;width:1px;height:19px;background:#CFC8AC"></div><div class="a" style="left:460px;top:178px;width:1px;height:19px;background:#FDFBF2"></div>
<svg class="a" style="left:466px;top:180px;" width="15" height="14" viewBox="0 0 15 14"><rect x="0.5" y="0.5" width="13" height="12" fill="#F4F8FC" stroke="#5A88C8"/><rect x="0.5" y="0.5" width="13" height="3" fill="#6AA0E0" stroke="#5A88C8"/><path d="M3 4.5 V11.5 M5 4.5 V11.5 M7 4.5 V11.5 M9 4.5 V11.5 M11 4.5 V11.5" stroke="#A8B4C8" stroke-width="0.8"/></svg>
<div class="t" style="left:484px;top:181px;">Субконто</div>
<div class="dds" style="left:534px;top:186px"></div>
<div class="a" style="left:544px;top:178px;width:1px;height:19px;background:#CFC8AC"></div><div class="a" style="left:545px;top:178px;width:1px;height:19px;background:#FDFBF2"></div>
<svg class="a" style="left:550px;top:178px;" width="18" height="18" viewBox="0 0 18 18"><defs><radialGradient id="hg" cx="0.4" cy="0.3" r="0.8"><stop offset="0" stop-color="#FFF0D0"/><stop offset="0.6" stop-color="#F0C070"/><stop offset="1" stop-color="#D8963A"/></radialGradient></defs><circle cx="9" cy="9" r="8" fill="url(#hg)" stroke="#B8823A" stroke-width="0.8"/><text x="5.6" y="13.2" font-family="Liberation Sans" font-weight="bold" font-size="12" fill="#7A4A10">?</text></svg>
<svg class="a" style="left:136px;top:204px;" width="13" height="9" viewBox="0 0 13 9"><path d="M4.5 1 H8.5 M2.5 4 H10.5 M0.5 7 H12.5" stroke="#D4C99A" stroke-width="2"/></svg>
<svg class="a" style="left:1416px;top:203px;" width="11" height="10" viewBox="0 0 11 10"><path d="M1 9 L5.5 1 L10 9 Z" fill="#9A9A98"/></svg>
<div class="a" style="left:1414px;top:485px;width:15px;height:16px;background:linear-gradient(to right,#F8F3DE,#E2D8AE);border-top:1px solid #B5AE90;border-bottom:1px solid #B5AE90"></div>
<div class="a" style="left:1419px;top:491px;width:4px;height:4px;background:#C9C2A4;border-radius:2px;border-right:1px solid #fff;border-bottom:1px solid #fff"></div>
<svg class="a" style="left:790px;top:124px;" width="16" height="17" viewBox="0 0 16 17"><defs><linearGradient id="bk124" x1="0" y1="0" x2="1" y2="0"><stop offset="0" stop-color="#2E8A3E"/><stop offset="0.5" stop-color="#58B468"/><stop offset="1" stop-color="#2E8A3E"/></linearGradient></defs><path d="M3.500 0.500 H14.500 V13 H3.500" fill="#D8ECD0" stroke="#7AA86E" stroke-width="0.8"/><rect x="0.500" y="2.500" width="12.500" height="13.500" rx="1.500" fill="url(#bk124)" stroke="#1E6A2E" stroke-width="0.9"/><path d="M2.500 6.500 H5.500 M2.500 9.300 H5.500 M2.500 12 H5.500" stroke="#EAF6E4" stroke-width="1.1"/></svg>
<svg class="a" style="left:790px;top:170px;" width="16" height="17" viewBox="0 0 16 17"><defs><linearGradient id="bk170" x1="0" y1="0" x2="1" y2="0"><stop offset="0" stop-color="#5AA64C"/><stop offset="0.5" stop-color="#9AD488"/><stop offset="1" stop-color="#66B058"/></linearGradient></defs><path d="M3.500 0.500 H14.500 V13 H3.500" fill="#D8ECD0" stroke="#7AA86E" stroke-width="0.8"/><rect x="0.500" y="2.500" width="12.500" height="13.500" rx="1.500" fill="url(#bk170)" stroke="#3E7E36" stroke-width="0.9"/><path d="M2.500 6.500 H5.500 M2.500 9.300 H5.500 M2.500 12 H5.500" stroke="#EAF6E4" stroke-width="1.1"/></svg>
<svg class="a" style="left:790px;top:193px;" width="16" height="17" viewBox="0 0 16 17"><defs><linearGradient id="bk193" x1="0" y1="0" x2="1" y2="0"><stop offset="0" stop-color="#5AA64C"/><stop offset="0.5" stop-color="#9AD488"/><stop offset="1" stop-color="#66B058"/></linearGradient></defs><path d="M3.500 0.500 H14.500 V13 H3.500" fill="#D8ECD0" stroke="#7AA86E" stroke-width="0.8"/><rect x="0.500" y="2.500" width="12.500" height="13.500" rx="1.500" fill="url(#bk193)" stroke="#3E7E36" stroke-width="0.9"/><path d="M2.500 6.500 H5.500 M2.500 9.300 H5.500 M2.500 12 H5.500" stroke="#EAF6E4" stroke-width="1.1"/></svg>
<div class="t" style="left:789px;top:146px;font-family:'Liberation Serif',serif;font-size:10px;font-weight:bold;color:#2E6E1E;line-height:9px;transform:none">Дт</div>
<div class="t" style="left:794px;top:154px;font-family:'Liberation Serif',serif;font-size:10px;font-weight:bold;color:#D84A3A;line-height:9px;transform:none">Кт</div>
<svg class="a" style="left:792px;top:221px;" width="12" height="14" viewBox="0 0 12 14"><path d="M0.5 0.5 H7.5 L10.5 3.5 V13.5 H0.5 Z" fill="#FBFBFD" stroke="#8E9CB8"/><path d="M7.5 0.5 V3.5 H10.5" fill="#E4EAF2" stroke="#8E9CB8" stroke-width="0.8"/><path d="M2 11.5 H9.5" stroke="#6A6A6A" stroke-width="0.8"/><rect x="2.5" y="5" width="1.6" height="6" fill="#C8302A"/><rect x="4.7" y="7" width="1.6" height="4" fill="#E8A030"/><rect x="6.9" y="6" width="1.6" height="5" fill="#3E9A3A"/></svg>
<svg class="a" style="left:792px;top:244px;" width="12" height="14" viewBox="0 0 12 14"><path d="M0.5 0.5 H7.5 L10.5 3.5 V13.5 H0.5 Z" fill="#FBFBFD" stroke="#8E9CB8"/><path d="M7.5 0.5 V3.5 H10.5" fill="#E4EAF2" stroke="#8E9CB8" stroke-width="0.8"/><path d="M2 11.5 H9.5" stroke="#6A6A6A" stroke-width="0.8"/><rect x="2.5" y="5" width="1.6" height="6" fill="#C8302A"/><rect x="4.7" y="7" width="1.6" height="4" fill="#E8A030"/><rect x="6.9" y="6" width="1.6" height="5" fill="#3E9A3A"/></svg>
<svg class="a" style="left:792px;top:271px;" width="12" height="14" viewBox="0 0 12 14"><path d="M0.5 0.5 H7.5 L10.5 3.5 V13.5 H0.5 Z" fill="#FBFBFD" stroke="#8E9CB8"/><path d="M7.5 0.5 V3.5 H10.5" fill="#E4EAF2" stroke="#8E9CB8" stroke-width="0.8"/><path d="M2 11.5 H9.5" stroke="#6A6A6A" stroke-width="0.8"/><rect x="2.5" y="5" width="1.6" height="6" fill="#C8302A"/><rect x="4.7" y="7" width="1.6" height="4" fill="#E8A030"/><rect x="6.9" y="6" width="1.6" height="5" fill="#3E9A3A"/></svg>
<svg class="a" style="left:792px;top:294px;" width="12" height="14" viewBox="0 0 12 14"><path d="M0.5 0.5 H7.5 L10.5 3.5 V13.5 H0.5 Z" fill="#FBFBFD" stroke="#8E9CB8"/><path d="M7.5 0.5 V3.5 H10.5" fill="#E4EAF2" stroke="#8E9CB8" stroke-width="0.8"/><path d="M2 11.5 H9.5" stroke="#6A6A6A" stroke-width="0.8"/><rect x="2.5" y="5" width="1.6" height="6" fill="#C8302A"/><rect x="4.7" y="7" width="1.6" height="4" fill="#E8A030"/><rect x="6.9" y="6" width="1.6" height="5" fill="#3E9A3A"/></svg>
<svg class="a" style="left:792px;top:548px;" width="12" height="14" viewBox="0 0 12 14"><path d="M0.5 0.5 H7.5 L10.5 3.5 V13.5 H0.5 Z" fill="#FBFBFD" stroke="#8E9CB8"/><path d="M7.5 0.5 V3.5 H10.5" fill="#E4EAF2" stroke="#8E9CB8" stroke-width="0.8"/><path d="M2 11.5 H9.5" stroke="#6A6A6A" stroke-width="0.8"/><rect x="2.5" y="5" width="1.6" height="6" fill="#C8302A"/><rect x="4.7" y="7" width="1.6" height="4" fill="#E8A030"/><rect x="6.9" y="6" width="1.6" height="5" fill="#3E9A3A"/></svg>
<svg class="a" style="left:790px;top:371px;" width="16" height="15" viewBox="0 0 16 15"><path d="M0.5 9.5 L5 1 L9.5 9.5 Z" fill="#F2B24A" stroke="#C8861E" stroke-width="0.8"/><rect x="4.5" y="3.8" width="1.1" height="3.2" fill="#7A4A10"/><rect x="4.5" y="7.6" width="1.1" height="1" fill="#7A4A10"/><circle cx="10" cy="5" r="2.8" fill="#E8B07A" stroke="#A8683A" stroke-width="0.6"/><path d="M7.200 4.600 A2.800 2.800 0 0 1 12.800 4.600 C11.500 3.600 9 3.400 7.200 4.600 Z" fill="#3A2A1A"/><path d="M5 14.5 C5 9 15 9 15 14.5 Z" fill="#2A58B8"/><path d="M9 10 L10 12.5 L11 10 Z" fill="#fff"/></svg>
<svg class="a" style="left:792px;top:470px;" width="12" height="15" viewBox="0 0 12 15"><path d="M0.5 0.5 H7.5 L10.5 3.5 V13.5 H0.5 Z" fill="#FBFBFD" stroke="#8E9CB8"/><path d="M7.5 0.5 V3.5 H10.5" fill="#E4EAF2" stroke="#8E9CB8" stroke-width="0.8"/><text x="1.6" y="8" font-family="Liberation Sans" font-weight="bold" font-size="5" fill="#2E7A2E">Д</text><text x="5" y="12" font-family="Liberation Sans" font-weight="bold" font-size="5" fill="#D83A3A">К</text></svg>
<div class="a" style="left:792px;top:527px;width:11px;height:3px;background:#D02028;border-radius:1px"></div>
<svg class="a" style="left:790px;top:647px;" width="16" height="16" viewBox="0 0 16 16"><circle cx="8" cy="8" r="6" fill="none" stroke="#9A9A9A" stroke-width="3" stroke-dasharray="2.6 2.1"/><circle cx="8" cy="8" r="4.8" fill="#C8C8C8" stroke="#8A8A8A" stroke-width="0.8"/><circle cx="8" cy="8" r="2" fill="#F0F0F0" stroke="#8A8A8A" stroke-width="0.6"/></svg>
<svg class="a" style="left:791px;top:671px;" width="14" height="14" viewBox="0 0 14 14"><rect x="0.5" y="1.0" width="2.2" height="2.2" fill="#222"/><rect x="0.5" y="3.2" width="2.2" height="2.2" fill="#fff"/><rect x="0.5" y="5.4" width="2.2" height="2.2" fill="#222"/><rect x="2.7" y="1.0" width="2.2" height="2.2" fill="#fff"/><rect x="2.7" y="3.2" width="2.2" height="2.2" fill="#222"/><rect x="2.7" y="5.4" width="2.2" height="2.2" fill="#fff"/><rect x="4.9" y="1.0" width="2.2" height="2.2" fill="#222"/><rect x="4.9" y="3.2" width="2.2" height="2.2" fill="#fff"/><rect x="4.9" y="5.4" width="2.2" height="2.2" fill="#222"/><rect x="7.1000000000000005" y="1.0" width="2.2" height="2.2" fill="#fff"/><rect x="7.1000000000000005" y="3.2" width="2.2" height="2.2" fill="#222"/><rect x="7.1000000000000005" y="5.4" width="2.2" height="2.2" fill="#fff"/><path d="M10 1 L11.5 13" stroke="#C8962A" stroke-width="1.6"/></svg>
<svg class="a" style="left:4px;top:820px;" width="18" height="17" viewBox="0 0 18 17"><path d="M0.5 0.5 H9 L12.5 4 V14.5 H0.5 Z" fill="#F0F2F6" stroke="#8E94A2"/><path d="M2 5.5 H10" stroke="#7A8090" stroke-width="1"/><path d="M2 7.5 H10" stroke="#7A8090" stroke-width="1"/><path d="M2 9.5 H10" stroke="#7A8090" stroke-width="1"/><path d="M2 11.5 H10" stroke="#7A8090" stroke-width="1"/><text x="9" y="16" font-family="Liberation Serif" font-weight="bold" font-size="11" fill="#101A8C">T</text></svg>
<svg class="a" style="left:176px;top:820px;" width="17" height="17" viewBox="0 0 17 17"><rect x="4.5" y="4.5" width="10" height="11" fill="#D6DBE4" stroke="#8E94A2"/><path d="M8 4.5 V15.5 M11.5 4.5 V15.5 M4.5 8 H14.5" stroke="#8E94A2" stroke-width="0.9"/><text x="0" y="9" font-family="Liberation Serif" font-weight="bold" font-size="11" fill="#D01818">Σ</text></svg>
<svg class="a" style="left:352px;top:821px;" width="14" height="15" viewBox="0 0 14 15"><path d="M0.5 2 H8 M4 2 V9.5" stroke="#3E7CB0" stroke-width="1.6" fill="none"/><path d="M5.5 5.5 H13 M9 5.5 V14.5" stroke="#3E7CB0" stroke-width="1.6" fill="none"/></svg>
<svg class="a" style="left:522px;top:820px;" width="18" height="17" viewBox="0 0 18 17"><path d="M0.5 0.5 H9 L12.5 4 V14.5 H0.5 Z" fill="#F0F2F6" stroke="#8E94A2"/><path d="M1 5.5 H12 M4 1 V14 M8 5 V14" stroke="#8E94A2" stroke-width="0.9"/><rect x="1" y="6" width="3" height="8" fill="#AEB5C2"/><text x="9" y="16" font-family="Liberation Serif" font-weight="bold" font-size="11" fill="#101A8C">T</text></svg>
<svg class="a" style="left:696px;top:820px;" width="18" height="17" viewBox="0 0 18 17"><path d="M0.5 0.5 H9 L12.5 4 V14.5 H0.5 Z" fill="#F0F2F6" stroke="#8E94A2"/><path d="M2 5.5 H10" stroke="#7A8090" stroke-width="1"/><path d="M2 7.5 H10" stroke="#7A8090" stroke-width="1"/><path d="M2 9.5 H10" stroke="#7A8090" stroke-width="1"/><path d="M2 11.5 H10" stroke="#7A8090" stroke-width="1"/><text x="9" y="16" font-family="Liberation Serif" font-weight="bold" font-size="11" fill="#101A8C">T</text></svg>
<svg class="a" style="left:869px;top:820px;" width="18" height="17" viewBox="0 0 18 17"><path d="M0.5 0.5 H9 L12.5 4 V14.5 H0.5 Z" fill="#F0F2F6" stroke="#8E94A2"/><path d="M2 5.5 H10" stroke="#7A8090" stroke-width="1"/><path d="M2 7.5 H10" stroke="#7A8090" stroke-width="1"/><path d="M2 9.5 H10" stroke="#7A8090" stroke-width="1"/><path d="M2 11.5 H10" stroke="#7A8090" stroke-width="1"/><text x="9" y="16" font-family="Liberation Serif" font-weight="bold" font-size="11" fill="#101A8C">T</text></svg>
<svg class="a" style="left:1414px;top:757px;" width="26" height="56" viewBox="0 0 26 56"><path d="M4 1 H26 V54 L1.500 38 V3.500 Q1.500 1 4 1 Z" fill="#595A5B"/><path d="M1.500 4 V37" stroke="#7E8082" stroke-width="1.2"/><rect x="5" y="6" width="21" height="20" fill="#124A8C"/><circle cx="16" cy="16" r="7.800" fill="#676B6F"/><path d="M11 16 H21 M9.500 16 L13.500 13.300 V18.700 Z M22.500 16 L18.500 13.300 V18.700 Z" stroke="#174E8E" stroke-width="1.8" fill="#174E8E"/></svg>
<svg class="a" style="left:11px;top:865px;" width="30" height="30" viewBox="0 0 30 30"><path d="M0.5 5 L11.500 3.400 V13 H0.500 Z M13 3.200 L27 1.200 V13 H13 Z M0.500 14.500 H11.500 V24.200 L0.500 22.600 Z M13 14.500 H27 V26.400 L13 24.400 Z" fill="#fff"/></svg>
<svg class="a" style="left:65px;top:864px;" width="34" height="32" viewBox="0 0 34 32"><rect x="0.5" y="0.5" width="13" height="26" fill="#1E7AD2" stroke="#D8F0FA" stroke-width="1"/><path d="M0.5 8.5 H13.5" stroke="#D8F0FA" stroke-width="1"/><rect x="6.500" y="17.5" width="24" height="13" rx="2" fill="#6E7E90" stroke="#E8F0F6" stroke-width="1"/><path d="M14 17.5 V15 H23 V17.5" fill="none" stroke="#E8F0F6" stroke-width="1.2"/><path d="M9 22 H28" stroke="#E8F0F6" stroke-width="1.2"/><rect x="11" y="20.5" width="1.5" height="3" fill="#E8F0F6"/><rect x="24.500" y="20.5" width="1.5" height="3" fill="#E8F0F6"/></svg>
<svg class="a" style="left:128px;top:868px;" width="30" height="24" viewBox="0 0 30 24"><defs><linearGradient id="ps" x1="0" y1="0" x2="1" y2="1"><stop offset="0" stop-color="#4A90D8"/><stop offset="1" stop-color="#1A4E9A"/></linearGradient></defs><path d="M6 1 H29 L24 22 H1 Z" fill="url(#ps)" stroke="#8EC0EA" stroke-width="0.8"/><path d="M9 6 L17 11.5 L8 17" fill="none" stroke="#fff" stroke-width="2.4"/><path d="M15 17.5 H22" stroke="#fff" stroke-width="2.2"/></svg>
<svg class="a" style="left:188px;top:865px;" width="36" height="32" viewBox="0 0 36 32"><path d="M2.500 5.500 H14 L16 3.500 H32.500 V27.500 H2.500 Z" fill="#F3DFA0" stroke="#D8BC72"/><rect x="5" y="2.500" width="4" height="3" fill="#3E9A3E"/><rect x="13" y="4.500" width="4" height="3" fill="#C8583A"/><rect x="21" y="6" width="4" height="3" fill="#3E9AC0"/><path d="M2.500 10.500 H32.500 V27.500 H2.500 Z" fill="#F7E8B0" stroke="#DCC47E"/><path d="M5.500 18.500 H28.500 V30.500 H23 V23.500 H11 V30.500 H5.500 Z" fill="#A9D2EE" stroke="#E4F1FA" stroke-width="1.2"/><path d="M7 20 H27" stroke="#D6EAF8" stroke-width="1.5"/></svg>
<svg class="a" style="left:251px;top:864px;" width="34" height="34" viewBox="0 0 34 34"><defs><linearGradient id="c1a" x1="0" y1="0" x2="0" y2="1"><stop offset="0" stop-color="#F0A22A"/><stop offset="0.45" stop-color="#F8D060"/><stop offset="1" stop-color="#FCEFC0"/></linearGradient><radialGradient id="c1b" cx="0.5" cy="0.62" r="0.5"><stop offset="0" stop-color="#FFF8D8" stop-opacity="0.9"/><stop offset="1" stop-color="#FFF8D8" stop-opacity="0"/></radialGradient></defs><circle cx="16.300" cy="16" r="14.500" fill="url(#c1a)" stroke="#EDB040" stroke-width="0.8"/><circle cx="16.300" cy="16" r="14" fill="url(#c1b)"/><path d="M4.500 13 L8.500 10.500 V20.500" fill="none" stroke="#D82A1A" stroke-width="2.600"/><path d="M4.500 13 L8.500 10.500 V20.500" fill="none" stroke="#FFD8A0" stroke-width="0.700"/><path d="M21.500 12 A5.200 5.200 0 1 0 17.500 20.500 H29" fill="none" stroke="#D82A1A" stroke-width="2.600"/><path d="M21.500 12 A5.200 5.200 0 1 0 17.500 20.500 H29" fill="none" stroke="#FFD8A0" stroke-width="0.700"/></svg>
<svg class="a" style="left:2px;top:3px;" width="17" height="17" viewBox="0 0 17 17"><defs><linearGradient id="c1t" x1="0" y1="0" x2="0" y2="1"><stop offset="0" stop-color="#F0A22A"/><stop offset="0.5" stop-color="#F8D060"/><stop offset="1" stop-color="#FCEFC0"/></linearGradient></defs><circle cx="8.300" cy="8.300" r="7.300" fill="url(#c1t)" stroke="#EDB040" stroke-width="0.6"/><path d="M2.600 7 L4.600 5.700 V10.600" fill="none" stroke="#D82A1A" stroke-width="1.500"/><path d="M11 6.300 A2.600 2.600 0 1 0 9 10.600 H14.600" fill="none" stroke="#D82A1A" stroke-width="1.500"/></svg>
<svg class="a" style="left:1204px;top:877px;" width="9" height="6" viewBox="0 0 9 6"><path d="M0 5.500 L4.500 0 L9 5.500 Z" fill="#111"/></svg>
<svg class="a" style="left:1225px;top:873px;" width="16" height="15" viewBox="0 0 16 15"><rect x="0" y="0" width="16" height="15" fill="#111"/><path d="M8 7.500 L2 1 M8 7.500 L14 1.500 M8 7.500 L14.500 13 M8 7.500 L1.500 14 M8 7.500 L8 0.500 M8 7.500 L15.500 7 M8 7.500 L8 14.500 M8 7.500 L0.500 8" stroke="#fff" stroke-width="1.6"/><circle cx="8" cy="7.500" r="2.6" fill="#111" stroke="#fff" stroke-width="1"/></svg>
<svg class="a" style="left:1249px;top:872px;" width="16" height="17" viewBox="0 0 16 17"><path d="M2 1 V16" stroke="#fff" stroke-width="2"/><path d="M2 1 V16" stroke="#555" stroke-width="0.6"/><path d="M3.500 2 C7 0.500 9 4 14.500 2.500 V9.500 C9 11 7 7.500 3.500 9 Z" fill="#fff" stroke="#666" stroke-width="0.7"/></svg>
<svg class="a" style="left:1273px;top:872px;" width="17" height="17" viewBox="0 0 17 17"><rect x="1" y="1" width="9" height="8" fill="#EAF4FA" stroke="#333" stroke-width="1.2"/><rect x="6.500" y="6.500" width="9" height="7" fill="#EAF4FA" stroke="#333" stroke-width="1.2"/><path d="M4 9 V14 H6.500 M9 15.500 H14" stroke="#333" stroke-width="1.1" fill="none"/><rect x="3" y="3" width="2" height="2" fill="#333"/></svg>
<svg class="a" style="left:1297px;top:872px;" width="16" height="17" viewBox="0 0 16 17"><path d="M1 6 H4 L8 2 V14 L4 10 H1 Z" fill="#fff" stroke="#555" stroke-width="0.8"/><circle cx="11" cy="12" r="4" fill="#D8342A" stroke="#fff" stroke-width="0.6"/><path d="M9.300 10.300 L12.700 13.700 M12.700 10.300 L9.300 13.700" stroke="#fff" stroke-width="1.3"/></svg>
</div></body></html>
